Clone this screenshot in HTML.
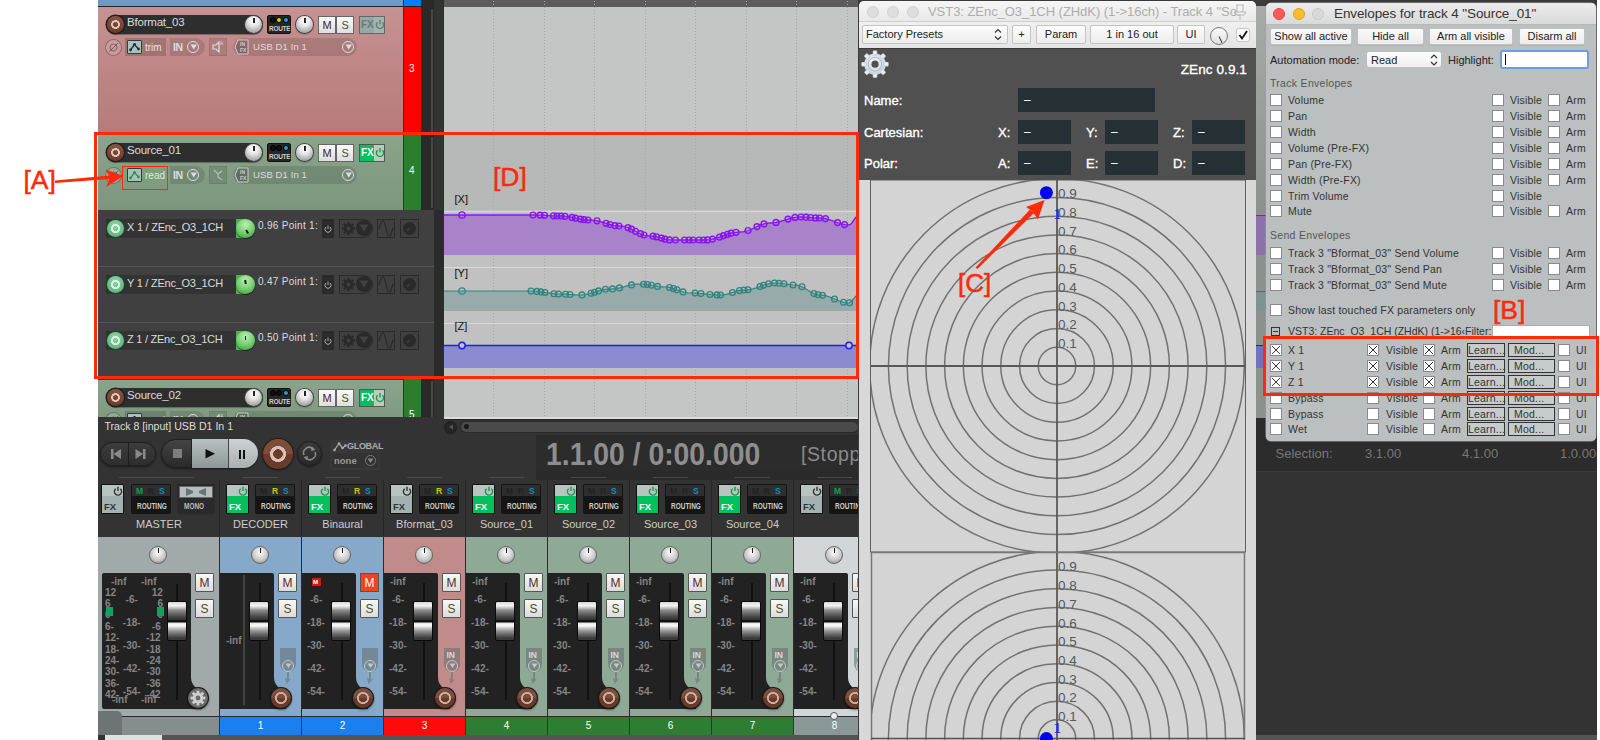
<!DOCTYPE html><html><head><meta charset="utf-8"><style>
*{margin:0;padding:0;box-sizing:border-box}
html,body{width:1600px;height:740px;overflow:hidden;background:#fff;font-family:"Liberation Sans",sans-serif}
div{position:absolute}
.t{white-space:nowrap;line-height:1}
svg{position:absolute}
</style></head><body>
<div style="left:98px;top:0px;width:1499px;height:740px;background:#333"></div>
<div style="left:98px;top:0px;width:305px;height:6px;background:#6f9ac4"></div>
<div style="left:404px;top:0px;width:17px;height:6px;background:#0a7ef5"></div>
<div style="left:98px;top:6px;width:323px;height:1px;background:#222"></div>
<div style="left:98px;top:7px;width:305px;height:127px;background:linear-gradient(#c69292,#b77a7a)"></div>
<div style="left:404px;top:7px;width:17px;height:127px;background:#ff0000"></div>
<div style="left:98px;top:135px;width:305px;height:75px;background:linear-gradient(#8ba58c,#7b967d)"></div>
<div style="left:98px;top:134px;width:323px;height:1px;background:#222"></div>
<div style="left:404px;top:135px;width:17px;height:75px;background:#2e7d2e"></div>
<div style="left:98px;top:210px;width:336px;height:168px;background:#404040"></div>
<div style="left:98px;top:266px;width:336px;height:1px;background:#555"></div>
<div style="left:98px;top:322px;width:336px;height:1px;background:#555"></div>
<div style="left:98px;top:378px;width:323px;height:1px;background:#222"></div>
<div style="left:98px;top:379px;width:305px;height:38px;background:linear-gradient(#8ba58c,#809a82)"></div>
<div style="left:98px;top:379px;width:305px;height:1px;background:#3a3a3a"></div>
<div style="left:404px;top:379px;width:17px;height:38px;background:#2e7d2e"></div>
<div class="t" style="left:409px;top:64px;color:#fff;font-size:10px">3</div>
<div class="t" style="left:409px;top:166px;color:#fff;font-size:10px">4</div>
<div class="t" style="left:409px;top:410px;color:#fff;font-size:10px">5</div>
<div style="left:421px;top:0px;width:13px;height:417px;background:#2a2a2a"></div>
<div style="left:434px;top:0px;width:9px;height:417px;background:#333"></div>
<div style="left:443px;top:0px;width:1px;height:417px;background:#4a2020"></div>
<div style="left:98px;top:210px;width:336px;height:168px;background:#404040"></div>
<div style="left:98px;top:266px;width:336px;height:1px;background:#555"></div>
<div style="left:98px;top:322px;width:336px;height:1px;background:#555"></div>
<div style="left:434px;top:210px;width:9px;height:168px;background:#2b2b2b"></div>
<div style="left:430.5px;top:9px;width:2px;height:123px;background:#474747"></div>
<div style="left:430.5px;top:137px;width:2px;height:71px;background:#474747"></div>
<div style="left:430.5px;top:381px;width:2px;height:36px;background:#474747"></div>
<div style="left:106px;top:15px;width:157px;height:19px;background:#2e2e2e;border-radius:10px;box-shadow:0 1px 1px rgba(0,0,0,.3)"></div>
<div style="left:107px;top:16px;width:17px;height:17px;background:radial-gradient(circle,transparent 0 2.2px,#d9c8c0 2.6px 4.2px,transparent 4.6px),linear-gradient(#8c5441,#6e3a28);border-radius:50%;box-shadow:0 0 0 1.5px #1e1e1e"></div>
<div class="t" style="left:127px;top:17px;color:#dcdcdc;font-size:11.5px;letter-spacing:-0.2px">Bformat_03</div>
<div style="left:245px;top:16px;width:17px;height:17px;background:radial-gradient(circle at 50% 30%,#ffffff 0,#e6e6e6 35%,#a8a8a8 75%,#6a6a6a 100%);border-radius:50%;box-shadow:0 0 0 1px #444,0 1px 2px rgba(0,0,0,.5)"></div>
<div style="left:253px;top:18px;width:1.5px;height:5px;background:#222"></div>
<div style="left:267px;top:15px;width:24px;height:19px;background:#262626;border:1px solid #111;border-radius:2px"></div>
<div style="left:269.5px;top:17px;width:6px;height:6px;background:#111;border-radius:50%;border:1px solid #000"></div>
<div style="left:276.0px;top:17px;width:6px;height:6px;background:#d8d800;border-radius:50%;border:1px solid #000"></div>
<div style="left:282.5px;top:17px;width:6px;height:6px;background:#1ea0e0;border-radius:50%;border:1px solid #000"></div>
<div class="t" style="left:269px;top:25.5px;color:#ccc;font-size:6.5px;font-weight:bold;letter-spacing:-0.3px">ROUTE</div>
<div style="left:296px;top:16px;width:17px;height:17px;background:radial-gradient(circle at 50% 30%,#ffffff 0,#e6e6e6 35%,#a8a8a8 75%,#6a6a6a 100%);border-radius:50%;box-shadow:0 0 0 1px #444,0 1px 2px rgba(0,0,0,.5)"></div>
<div style="left:304px;top:18px;width:1.5px;height:5px;background:#222"></div>
<div style="left:318px;top:16px;width:18px;height:18px;background:linear-gradient(#fafafa,#dedede);border:1px solid #666"></div>
<div class="t" style="left:322.5px;top:19.5px;color:#4a2018;font-size:11px">M</div>
<div style="left:336px;top:16px;width:18px;height:18px;background:linear-gradient(#fafafa,#dedede);border:1px solid #666"></div>
<div class="t" style="left:341.5px;top:19.5px;color:#4a5418;font-size:11px">S</div>
<div style="left:359px;top:16px;width:26px;height:18px;background:#a2b5af;border:1px solid #666"></div>
<div style="left:360px;top:17px;width:14px;height:16px;background:#96a9a4"></div>
<div class="t" style="left:361px;top:20px;color:#6a7a75;font-size:10px;font-weight:bold">FX</div>
<svg style="left:375px;top:19px" width="10" height="11"><path d="M2.6,3.2 A3.6,3.6 0 1 0 7.4,3.2" fill="none" stroke="#6a7a75" stroke-width="1.4"/><line x1="5" y1="1" x2="5" y2="5.5" stroke="#6a7a75" stroke-width="1.4"/></svg>
<div style="left:105px;top:39px;width:17px;height:17px;border:1px solid rgba(0,0,0,.3);border-radius:50%;background:rgba(255,255,255,.15)"></div>
<svg style="left:108px;top:42px" width="11" height="11"><circle cx="5.5" cy="5.5" r="3.5" fill="none" stroke="rgba(0,0,0,.35)" stroke-width="1"/><line x1="1" y1="10" x2="10" y2="1" stroke="rgba(0,0,0,.35)" stroke-width="1"/></svg>
<div style="left:125px;top:38px;width:41px;height:18px;background:rgba(0,0,0,.16)"></div>
<div style="left:127px;top:40px;width:15px;height:14px;background:#a8c2c0;border:1px solid #3a3a3a;border-radius:1px"></div>
<svg style="left:128px;top:41px" width="13" height="12"><polyline points="2.5,9 6.5,3.5 10.5,8" fill="none" stroke="#2a2a2a" stroke-width="1.3"/><circle cx="2.5" cy="9" r="1.4" fill="#2a2a2a"/><circle cx="6.5" cy="3.5" r="1.4" fill="#2a2a2a"/><circle cx="10.5" cy="8" r="1.4" fill="#2a2a2a"/></svg>
<div class="t" style="left:145px;top:43px;color:#e4e4e4;font-size:10px">trim</div>
<div style="left:170px;top:38px;width:35px;height:18px;background:rgba(0,0,0,.12);border-radius:0 9px 9px 0"></div>
<div class="t" style="left:173px;top:42px;color:#ddd;font-size:10.5px;font-weight:bold;letter-spacing:-0.5px">IN</div>
<div style="left:187px;top:41px;width:12px;height:12px;border:1.5px solid #ddd;border-radius:50%"></div>
<svg style="left:189.5px;top:44px" width="8" height="6"><polygon points="0.5,0.5 7,0.5 3.75,5.5" fill="#ddd"/></svg>
<div style="left:209px;top:38px;width:18px;height:18px;background:rgba(0,0,0,.10);border:1px solid rgba(0,0,0,.08)"></div>
<svg style="left:211px;top:40px" width="14" height="14"><path d="M2,5 h3 l3,-3 v10 l-3,-3 h-3 z" fill="none" stroke="#ddd" stroke-width="1.2"/><text x="9" y="5" font-size="5" fill="#ddd" font-family="Liberation Sans">A</text></svg>
<div style="left:233px;top:38px;width:124px;height:18px;background:rgba(0,0,0,.12);border-radius:9px"></div>
<svg style="left:234px;top:39px" width="16" height="16"><polygon points="4,1 14,1 14,15 4,15 1,8" fill="rgba(0,0,0,.18)" stroke="#ccc" stroke-width="1"/><text x="6" y="7" font-size="5" fill="#ccc" font-family="Liberation Sans" font-weight="bold">IN</text><text x="6" y="13" font-size="5" fill="#ccc" font-family="Liberation Sans" font-weight="bold">FX</text></svg>
<div class="t" style="left:253px;top:41.5px;color:#ddd;font-size:9.5px;letter-spacing:0.1px">USB D1 In 1</div>
<div style="left:342px;top:41px;width:12px;height:12px;border:1.5px solid #ddd;border-radius:50%"></div>
<svg style="left:344.5px;top:44px" width="8" height="6"><polygon points="0.5,0.5 7,0.5 3.75,5.5" fill="#ddd"/></svg>
<div style="left:106px;top:143px;width:157px;height:19px;background:#2e2e2e;border-radius:10px;box-shadow:0 1px 1px rgba(0,0,0,.3)"></div>
<div style="left:107px;top:144px;width:17px;height:17px;background:radial-gradient(circle,transparent 0 2.2px,#d9c8c0 2.6px 4.2px,transparent 4.6px),linear-gradient(#8c5441,#6e3a28);border-radius:50%;box-shadow:0 0 0 1.5px #1e1e1e"></div>
<div class="t" style="left:127px;top:145px;color:#dcdcdc;font-size:11.5px;letter-spacing:-0.2px">Source_01</div>
<div style="left:245px;top:144px;width:17px;height:17px;background:radial-gradient(circle at 50% 30%,#ffffff 0,#e6e6e6 35%,#a8a8a8 75%,#6a6a6a 100%);border-radius:50%;box-shadow:0 0 0 1px #444,0 1px 2px rgba(0,0,0,.5)"></div>
<div style="left:253px;top:146px;width:1.5px;height:5px;background:#222"></div>
<div style="left:267px;top:143px;width:24px;height:19px;background:#262626;border:1px solid #111;border-radius:2px"></div>
<div style="left:269.5px;top:145px;width:6px;height:6px;background:#111;border-radius:50%;border:1px solid #000"></div>
<div style="left:276.0px;top:145px;width:6px;height:6px;background:#111;border-radius:50%;border:1px solid #000"></div>
<div style="left:282.5px;top:145px;width:6px;height:6px;background:#1ea0e0;border-radius:50%;border:1px solid #000"></div>
<div class="t" style="left:269px;top:153.5px;color:#ccc;font-size:6.5px;font-weight:bold;letter-spacing:-0.3px">ROUTE</div>
<div style="left:296px;top:144px;width:17px;height:17px;background:radial-gradient(circle at 50% 30%,#ffffff 0,#e6e6e6 35%,#a8a8a8 75%,#6a6a6a 100%);border-radius:50%;box-shadow:0 0 0 1px #444,0 1px 2px rgba(0,0,0,.5)"></div>
<div style="left:304px;top:146px;width:1.5px;height:5px;background:#222"></div>
<div style="left:318px;top:144px;width:18px;height:18px;background:linear-gradient(#fafafa,#dedede);border:1px solid #666"></div>
<div class="t" style="left:322.5px;top:147.5px;color:#4a2018;font-size:11px">M</div>
<div style="left:336px;top:144px;width:18px;height:18px;background:linear-gradient(#fafafa,#dedede);border:1px solid #666"></div>
<div class="t" style="left:341.5px;top:147.5px;color:#4a5418;font-size:11px">S</div>
<div style="left:359px;top:144px;width:26px;height:18px;background:#b8cfc0;border:1px solid #555"></div>
<div style="left:360px;top:145px;width:14px;height:16px;background:#00c060"></div>
<div class="t" style="left:361px;top:148px;color:#fff;font-size:10px;font-weight:bold">FX</div>
<svg style="left:375px;top:147px" width="10" height="11"><path d="M2.6,3.2 A3.6,3.6 0 1 0 7.4,3.2" fill="none" stroke="#1a9a50" stroke-width="1.4"/><line x1="5" y1="1" x2="5" y2="5.5" stroke="#1a9a50" stroke-width="1.4"/></svg>
<div style="left:105px;top:167px;width:17px;height:17px;border:1px solid rgba(0,0,0,.3);border-radius:50%;background:rgba(255,255,255,.15)"></div>
<svg style="left:108px;top:170px" width="11" height="11"><circle cx="5.5" cy="5.5" r="3.5" fill="none" stroke="rgba(0,0,0,.35)" stroke-width="1"/><line x1="1" y1="10" x2="10" y2="1" stroke="rgba(0,0,0,.35)" stroke-width="1"/></svg>
<div style="left:125px;top:166px;width:41px;height:18px;background:rgba(110,170,110,.35)"></div>
<div style="left:127px;top:168px;width:15px;height:14px;background:#a8c2c0;border:1px solid #3a3a3a;border-radius:1px"></div>
<svg style="left:128px;top:169px" width="13" height="12"><polyline points="2.5,9 6.5,3.5 10.5,8" fill="none" stroke="#2a9a3a" stroke-width="1.3"/><circle cx="2.5" cy="9" r="1.4" fill="#2a9a3a"/><circle cx="6.5" cy="3.5" r="1.4" fill="#2a9a3a"/><circle cx="10.5" cy="8" r="1.4" fill="#2a9a3a"/></svg>
<div class="t" style="left:145px;top:171px;color:#e4e4e4;font-size:10px">read</div>
<div style="left:170px;top:166px;width:35px;height:18px;background:rgba(0,0,0,.12);border-radius:0 9px 9px 0"></div>
<div class="t" style="left:173px;top:170px;color:#ddd;font-size:10.5px;font-weight:bold;letter-spacing:-0.5px">IN</div>
<div style="left:187px;top:169px;width:12px;height:12px;border:1.5px solid #ddd;border-radius:50%"></div>
<svg style="left:189.5px;top:172px" width="8" height="6"><polygon points="0.5,0.5 7,0.5 3.75,5.5" fill="#ddd"/></svg>
<div style="left:209px;top:166px;width:18px;height:18px;background:rgba(0,0,0,.10);border:1px solid rgba(0,0,0,.08)"></div>
<svg style="left:211px;top:168px" width="14" height="14"><path d="M3,2 L7,6 V9 L11,12 M7,6 L11,3" fill="none" stroke="rgba(255,255,255,.45)" stroke-width="1.2"/></svg>
<div style="left:233px;top:166px;width:124px;height:18px;background:rgba(0,0,0,.12);border-radius:9px"></div>
<svg style="left:234px;top:167px" width="16" height="16"><polygon points="4,1 14,1 14,15 4,15 1,8" fill="rgba(0,0,0,.18)" stroke="#ccc" stroke-width="1"/><text x="6" y="7" font-size="5" fill="#ccc" font-family="Liberation Sans" font-weight="bold">IN</text><text x="6" y="13" font-size="5" fill="#ccc" font-family="Liberation Sans" font-weight="bold">FX</text></svg>
<div class="t" style="left:253px;top:169.5px;color:#ddd;font-size:9.5px;letter-spacing:0.1px">USB D1 In 1</div>
<div style="left:342px;top:169px;width:12px;height:12px;border:1.5px solid #ddd;border-radius:50%"></div>
<svg style="left:344.5px;top:172px" width="8" height="6"><polygon points="0.5,0.5 7,0.5 3.75,5.5" fill="#ddd"/></svg>
<div style="left:106px;top:219px;width:130px;height:19px;background:#333"></div>
<div style="left:107px;top:220px;width:17px;height:17px;background:radial-gradient(circle,transparent 0 2.4px,#d8f0e0 2.8px 4.4px,transparent 4.8px),radial-gradient(circle at 50% 30%,#8fd4a8,#5aaa78);border-radius:50%;box-shadow:0 0 0 1.2px #1a4a2a"></div>
<div class="t" style="left:127px;top:221.5px;color:#dcdcdc;font-size:11px;letter-spacing:-0.25px">X 1 / ZEnc_O3_1CH</div>
<div style="left:236px;top:219px;width:10px;height:19px;background:#4fae4f"></div>
<div style="left:236px;top:219px;width:19px;height:19px;background:radial-gradient(circle at 50% 30%,#b8f2b0,#78d070 50%,#3e9a3e 95%);border-radius:50%;box-shadow:0 1px 1px rgba(0,0,0,.5)"></div>
<div style="left:244.8px;top:223.5px;width:1.6px;height:4px;background:#1a1a1a;transform-origin:50% 5px;transform:rotate(150deg)"></div>
<div class="t" style="left:258px;top:221px;color:#dcdcdc;font-size:10px;letter-spacing:0.3px">0.96 Point 1:</div>
<div style="left:322px;top:219px;width:12px;height:19px;background:#2a2a2a"></div>
<svg style="left:323px;top:224px" width="10" height="10"><path d="M3,3 A3,3 0 1 0 7,3" fill="none" stroke="#aaa" stroke-width="1"/><line x1="5" y1="1.5" x2="5" y2="5" stroke="#aaa" stroke-width="1"/></svg>
<div style="left:339px;top:219px;width:34px;height:19px;border:1px solid #2a2a2a;border-radius:0 10px 10px 0"></div>
<svg style="left:341px;top:221px" width="15" height="15"><g fill="#2a2a2a"><circle cx="7.5" cy="7.5" r="4.5"/><rect x="6.2" y="1" width="2.6" height="3.5" transform="rotate(0 7.5 7.5)"/><rect x="6.2" y="1" width="2.6" height="3.5" transform="rotate(45 7.5 7.5)"/><rect x="6.2" y="1" width="2.6" height="3.5" transform="rotate(90 7.5 7.5)"/><rect x="6.2" y="1" width="2.6" height="3.5" transform="rotate(135 7.5 7.5)"/><rect x="6.2" y="1" width="2.6" height="3.5" transform="rotate(180 7.5 7.5)"/><rect x="6.2" y="1" width="2.6" height="3.5" transform="rotate(225 7.5 7.5)"/><rect x="6.2" y="1" width="2.6" height="3.5" transform="rotate(270 7.5 7.5)"/><rect x="6.2" y="1" width="2.6" height="3.5" transform="rotate(315 7.5 7.5)"/></g><circle cx="7.5" cy="7.5" r="2" fill="#404040"/></svg>
<div style="left:356px;top:220px;width:16px;height:16px;background:#2a2a2a;border-radius:50%"></div>
<svg style="left:359px;top:224px" width="10" height="8"><polygon points="0.5,0.5 9.5,0.5 5,7.5" fill="#404040"/></svg>
<div style="left:377px;top:219px;width:18px;height:19px;border:1px solid #2a2a2a"></div>
<svg style="left:378px;top:220px" width="16" height="17"><path d="M1,9 C4,-2 6,-2 8,8.5 S12,19 15,8" fill="none" stroke="#2a2a2a" stroke-width="1.3"/></svg>
<div style="left:400px;top:219px;width:19px;height:19px;border:1px solid #2a2a2a"></div>
<div style="left:403px;top:222px;width:13px;height:13px;background:#2a2a2a;border-radius:50%"></div>
<svg style="left:403px;top:222px" width="13" height="13"><line x1="4" y1="9" x2="7" y2="6" stroke="#404040" stroke-width="1.5"/></svg>
<div style="left:106px;top:275px;width:130px;height:19px;background:#333"></div>
<div style="left:107px;top:276px;width:17px;height:17px;background:radial-gradient(circle,transparent 0 2.4px,#d8f0e0 2.8px 4.4px,transparent 4.8px),radial-gradient(circle at 50% 30%,#8fd4a8,#5aaa78);border-radius:50%;box-shadow:0 0 0 1.2px #1a4a2a"></div>
<div class="t" style="left:127px;top:277.5px;color:#dcdcdc;font-size:11px;letter-spacing:-0.25px">Y 1 / ZEnc_O3_1CH</div>
<div style="left:236px;top:275px;width:10px;height:19px;background:#4fae4f"></div>
<div style="left:236px;top:275px;width:19px;height:19px;background:radial-gradient(circle at 50% 30%,#b8f2b0,#78d070 50%,#3e9a3e 95%);border-radius:50%;box-shadow:0 1px 1px rgba(0,0,0,.5)"></div>
<div style="left:244.8px;top:279.5px;width:1.6px;height:4px;background:#1a1a1a;transform-origin:50% 5px;transform:rotate(-10deg)"></div>
<div class="t" style="left:258px;top:277px;color:#dcdcdc;font-size:10px;letter-spacing:0.3px">0.47 Point 1:</div>
<div style="left:322px;top:275px;width:12px;height:19px;background:#2a2a2a"></div>
<svg style="left:323px;top:280px" width="10" height="10"><path d="M3,3 A3,3 0 1 0 7,3" fill="none" stroke="#aaa" stroke-width="1"/><line x1="5" y1="1.5" x2="5" y2="5" stroke="#aaa" stroke-width="1"/></svg>
<div style="left:339px;top:275px;width:34px;height:19px;border:1px solid #2a2a2a;border-radius:0 10px 10px 0"></div>
<svg style="left:341px;top:277px" width="15" height="15"><g fill="#2a2a2a"><circle cx="7.5" cy="7.5" r="4.5"/><rect x="6.2" y="1" width="2.6" height="3.5" transform="rotate(0 7.5 7.5)"/><rect x="6.2" y="1" width="2.6" height="3.5" transform="rotate(45 7.5 7.5)"/><rect x="6.2" y="1" width="2.6" height="3.5" transform="rotate(90 7.5 7.5)"/><rect x="6.2" y="1" width="2.6" height="3.5" transform="rotate(135 7.5 7.5)"/><rect x="6.2" y="1" width="2.6" height="3.5" transform="rotate(180 7.5 7.5)"/><rect x="6.2" y="1" width="2.6" height="3.5" transform="rotate(225 7.5 7.5)"/><rect x="6.2" y="1" width="2.6" height="3.5" transform="rotate(270 7.5 7.5)"/><rect x="6.2" y="1" width="2.6" height="3.5" transform="rotate(315 7.5 7.5)"/></g><circle cx="7.5" cy="7.5" r="2" fill="#404040"/></svg>
<div style="left:356px;top:276px;width:16px;height:16px;background:#2a2a2a;border-radius:50%"></div>
<svg style="left:359px;top:280px" width="10" height="8"><polygon points="0.5,0.5 9.5,0.5 5,7.5" fill="#404040"/></svg>
<div style="left:377px;top:275px;width:18px;height:19px;border:1px solid #2a2a2a"></div>
<svg style="left:378px;top:276px" width="16" height="17"><path d="M1,9 C4,-2 6,-2 8,8.5 S12,19 15,8" fill="none" stroke="#2a2a2a" stroke-width="1.3"/></svg>
<div style="left:400px;top:275px;width:19px;height:19px;border:1px solid #2a2a2a"></div>
<div style="left:403px;top:278px;width:13px;height:13px;background:#2a2a2a;border-radius:50%"></div>
<svg style="left:403px;top:278px" width="13" height="13"><line x1="4" y1="9" x2="7" y2="6" stroke="#404040" stroke-width="1.5"/></svg>
<div style="left:106px;top:331px;width:130px;height:19px;background:#333"></div>
<div style="left:107px;top:332px;width:17px;height:17px;background:radial-gradient(circle,transparent 0 2.4px,#d8f0e0 2.8px 4.4px,transparent 4.8px),radial-gradient(circle at 50% 30%,#8fd4a8,#5aaa78);border-radius:50%;box-shadow:0 0 0 1.2px #1a4a2a"></div>
<div class="t" style="left:127px;top:333.5px;color:#dcdcdc;font-size:11px;letter-spacing:-0.25px">Z 1 / ZEnc_O3_1CH</div>
<div style="left:236px;top:331px;width:10px;height:19px;background:#4fae4f"></div>
<div style="left:236px;top:331px;width:19px;height:19px;background:radial-gradient(circle at 50% 30%,#b8f2b0,#78d070 50%,#3e9a3e 95%);border-radius:50%;box-shadow:0 1px 1px rgba(0,0,0,.5)"></div>
<div style="left:244.8px;top:335.5px;width:1.6px;height:4px;background:#1a1a1a;transform-origin:50% 5px;transform:rotate(0deg)"></div>
<div class="t" style="left:258px;top:333px;color:#dcdcdc;font-size:10px;letter-spacing:0.3px">0.50 Point 1:</div>
<div style="left:322px;top:331px;width:12px;height:19px;background:#2a2a2a"></div>
<svg style="left:323px;top:336px" width="10" height="10"><path d="M3,3 A3,3 0 1 0 7,3" fill="none" stroke="#aaa" stroke-width="1"/><line x1="5" y1="1.5" x2="5" y2="5" stroke="#aaa" stroke-width="1"/></svg>
<div style="left:339px;top:331px;width:34px;height:19px;border:1px solid #2a2a2a;border-radius:0 10px 10px 0"></div>
<svg style="left:341px;top:333px" width="15" height="15"><g fill="#2a2a2a"><circle cx="7.5" cy="7.5" r="4.5"/><rect x="6.2" y="1" width="2.6" height="3.5" transform="rotate(0 7.5 7.5)"/><rect x="6.2" y="1" width="2.6" height="3.5" transform="rotate(45 7.5 7.5)"/><rect x="6.2" y="1" width="2.6" height="3.5" transform="rotate(90 7.5 7.5)"/><rect x="6.2" y="1" width="2.6" height="3.5" transform="rotate(135 7.5 7.5)"/><rect x="6.2" y="1" width="2.6" height="3.5" transform="rotate(180 7.5 7.5)"/><rect x="6.2" y="1" width="2.6" height="3.5" transform="rotate(225 7.5 7.5)"/><rect x="6.2" y="1" width="2.6" height="3.5" transform="rotate(270 7.5 7.5)"/><rect x="6.2" y="1" width="2.6" height="3.5" transform="rotate(315 7.5 7.5)"/></g><circle cx="7.5" cy="7.5" r="2" fill="#404040"/></svg>
<div style="left:356px;top:332px;width:16px;height:16px;background:#2a2a2a;border-radius:50%"></div>
<svg style="left:359px;top:336px" width="10" height="8"><polygon points="0.5,0.5 9.5,0.5 5,7.5" fill="#404040"/></svg>
<div style="left:377px;top:331px;width:18px;height:19px;border:1px solid #2a2a2a"></div>
<svg style="left:378px;top:332px" width="16" height="17"><path d="M1,9 C4,-2 6,-2 8,8.5 S12,19 15,8" fill="none" stroke="#2a2a2a" stroke-width="1.3"/></svg>
<div style="left:400px;top:331px;width:19px;height:19px;border:1px solid #2a2a2a"></div>
<div style="left:403px;top:334px;width:13px;height:13px;background:#2a2a2a;border-radius:50%"></div>
<svg style="left:403px;top:334px" width="13" height="13"><line x1="4" y1="9" x2="7" y2="6" stroke="#404040" stroke-width="1.5"/></svg>
<div style="left:106px;top:388px;width:157px;height:19px;background:#2e2e2e;border-radius:10px;box-shadow:0 1px 1px rgba(0,0,0,.3)"></div>
<div style="left:107px;top:389px;width:17px;height:17px;background:radial-gradient(circle,transparent 0 2.2px,#d9c8c0 2.6px 4.2px,transparent 4.6px),linear-gradient(#8c5441,#6e3a28);border-radius:50%;box-shadow:0 0 0 1.5px #1e1e1e"></div>
<div class="t" style="left:127px;top:390px;color:#dcdcdc;font-size:11.5px;letter-spacing:-0.2px">Source_02</div>
<div style="left:245px;top:389px;width:17px;height:17px;background:radial-gradient(circle at 50% 30%,#ffffff 0,#e6e6e6 35%,#a8a8a8 75%,#6a6a6a 100%);border-radius:50%;box-shadow:0 0 0 1px #444,0 1px 2px rgba(0,0,0,.5)"></div>
<div style="left:253px;top:391px;width:1.5px;height:5px;background:#222"></div>
<div style="left:267px;top:388px;width:24px;height:19px;background:#262626;border:1px solid #111;border-radius:2px"></div>
<div style="left:269.5px;top:390px;width:6px;height:6px;background:#111;border-radius:50%;border:1px solid #000"></div>
<div style="left:276.0px;top:390px;width:6px;height:6px;background:#111;border-radius:50%;border:1px solid #000"></div>
<div style="left:282.5px;top:390px;width:6px;height:6px;background:#1ea0e0;border-radius:50%;border:1px solid #000"></div>
<div class="t" style="left:269px;top:398.5px;color:#ccc;font-size:6.5px;font-weight:bold;letter-spacing:-0.3px">ROUTE</div>
<div style="left:296px;top:389px;width:17px;height:17px;background:radial-gradient(circle at 50% 30%,#ffffff 0,#e6e6e6 35%,#a8a8a8 75%,#6a6a6a 100%);border-radius:50%;box-shadow:0 0 0 1px #444,0 1px 2px rgba(0,0,0,.5)"></div>
<div style="left:304px;top:391px;width:1.5px;height:5px;background:#222"></div>
<div style="left:318px;top:389px;width:18px;height:18px;background:linear-gradient(#fafafa,#dedede);border:1px solid #666"></div>
<div class="t" style="left:322.5px;top:392.5px;color:#4a2018;font-size:11px">M</div>
<div style="left:336px;top:389px;width:18px;height:18px;background:linear-gradient(#fafafa,#dedede);border:1px solid #666"></div>
<div class="t" style="left:341.5px;top:392.5px;color:#4a5418;font-size:11px">S</div>
<div style="left:359px;top:389px;width:26px;height:18px;background:#b8cfc0;border:1px solid #555"></div>
<div style="left:360px;top:390px;width:14px;height:16px;background:#00c060"></div>
<div class="t" style="left:361px;top:393px;color:#fff;font-size:10px;font-weight:bold">FX</div>
<svg style="left:375px;top:392px" width="10" height="11"><path d="M2.6,3.2 A3.6,3.6 0 1 0 7.4,3.2" fill="none" stroke="#1a9a50" stroke-width="1.4"/><line x1="5" y1="1" x2="5" y2="5.5" stroke="#1a9a50" stroke-width="1.4"/></svg>
<div style="left:105px;top:412px;width:17px;height:17px;border:1px solid rgba(0,0,0,.3);border-radius:50%;background:rgba(255,255,255,.15)"></div>
<svg style="left:108px;top:415px" width="11" height="11"><circle cx="5.5" cy="5.5" r="3.5" fill="none" stroke="rgba(0,0,0,.35)" stroke-width="1"/><line x1="1" y1="10" x2="10" y2="1" stroke="rgba(0,0,0,.35)" stroke-width="1"/></svg>
<div style="left:125px;top:411px;width:41px;height:18px;background:rgba(0,0,0,.16)"></div>
<div style="left:127px;top:413px;width:15px;height:14px;background:#a8c2c0;border:1px solid #3a3a3a;border-radius:1px"></div>
<svg style="left:128px;top:414px" width="13" height="12"><polyline points="2.5,9 6.5,3.5 10.5,8" fill="none" stroke="#2a2a2a" stroke-width="1.3"/><circle cx="2.5" cy="9" r="1.4" fill="#2a2a2a"/><circle cx="6.5" cy="3.5" r="1.4" fill="#2a2a2a"/><circle cx="10.5" cy="8" r="1.4" fill="#2a2a2a"/></svg>
<div class="t" style="left:145px;top:416px;color:#e4e4e4;font-size:10px">read</div>
<div style="left:170px;top:411px;width:35px;height:18px;background:rgba(0,0,0,.12);border-radius:0 9px 9px 0"></div>
<div class="t" style="left:173px;top:415px;color:#ddd;font-size:10.5px;font-weight:bold;letter-spacing:-0.5px">IN</div>
<div style="left:187px;top:414px;width:12px;height:12px;border:1.5px solid #ddd;border-radius:50%"></div>
<svg style="left:189.5px;top:417px" width="8" height="6"><polygon points="0.5,0.5 7,0.5 3.75,5.5" fill="#ddd"/></svg>
<div style="left:209px;top:411px;width:18px;height:18px;background:rgba(0,0,0,.10);border:1px solid rgba(0,0,0,.08)"></div>
<svg style="left:211px;top:413px" width="14" height="14"><path d="M2,5 h3 l3,-3 v10 l-3,-3 h-3 z" fill="none" stroke="#ddd" stroke-width="1.2"/><text x="9" y="5" font-size="5" fill="#ddd" font-family="Liberation Sans">A</text></svg>
<div style="left:233px;top:411px;width:124px;height:18px;background:rgba(0,0,0,.12);border-radius:9px"></div>
<svg style="left:234px;top:412px" width="16" height="16"><polygon points="4,1 14,1 14,15 4,15 1,8" fill="rgba(0,0,0,.18)" stroke="#ccc" stroke-width="1"/><text x="6" y="7" font-size="5" fill="#ccc" font-family="Liberation Sans" font-weight="bold">IN</text><text x="6" y="13" font-size="5" fill="#ccc" font-family="Liberation Sans" font-weight="bold">FX</text></svg>
<div class="t" style="left:253px;top:414.5px;color:#ddd;font-size:9.5px;letter-spacing:0.1px">USB D1 In 1</div>
<div style="left:342px;top:414px;width:12px;height:12px;border:1.5px solid #ddd;border-radius:50%"></div>
<svg style="left:344.5px;top:417px" width="8" height="6"><polygon points="0.5,0.5 7,0.5 3.75,5.5" fill="#ddd"/></svg>
<div style="left:444px;top:0px;width:414px;height:417px;background:#c4c6c5"></div>
<div style="left:444px;top:0px;width:414px;height:6.5px;background:#5b5c5b"></div>
<div style="left:444px;top:135px;width:414px;height:75px;background:#b7b9b8"></div>
<div style="left:444px;top:210px;width:414px;height:168px;background:#c0c1c0"></div>
<div style="left:493.0px;top:1px;width:1px;height:416px;background:repeating-linear-gradient(#a4a5a4 0 1px,transparent 1px 3px)"></div>
<div style="left:543.55px;top:1px;width:1px;height:416px;background:repeating-linear-gradient(#a4a5a4 0 1px,transparent 1px 3px)"></div>
<div style="left:594.1px;top:1px;width:1px;height:416px;background:repeating-linear-gradient(#a4a5a4 0 1px,transparent 1px 3px)"></div>
<div style="left:644.65px;top:1px;width:1px;height:416px;background:repeating-linear-gradient(#a4a5a4 0 1px,transparent 1px 3px)"></div>
<div style="left:695.2px;top:1px;width:1px;height:416px;background:repeating-linear-gradient(#a4a5a4 0 1px,transparent 1px 3px)"></div>
<div style="left:745.75px;top:1px;width:1px;height:416px;background:repeating-linear-gradient(#a4a5a4 0 1px,transparent 1px 3px)"></div>
<div style="left:796.3px;top:1px;width:1px;height:416px;background:repeating-linear-gradient(#a4a5a4 0 1px,transparent 1px 3px)"></div>
<div style="left:846.8499999999999px;top:1px;width:1px;height:416px;background:repeating-linear-gradient(#a4a5a4 0 1px,transparent 1px 3px)"></div>
<div style="left:444px;top:211px;width:414px;height:1px;background:#d8d9d8"></div>
<div style="left:444px;top:267px;width:414px;height:1px;background:#d8d9d8"></div>
<div style="left:444px;top:323px;width:414px;height:1px;background:#d8d9d8"></div>
<svg style="left:0;top:0" width="1600" height="740"><polygon points="444,215 461.0,215.0 463.0,215.0 465.0,215.0 467.0,215.0 469.0,215.0 471.0,215.0 473.0,215.0 475.0,215.0 477.0,215.0 479.0,215.0 481.0,215.0 483.0,215.0 485.0,215.0 487.0,215.0 489.0,215.0 491.0,215.0 493.0,215.0 495.0,215.0 497.0,215.0 499.0,215.0 501.0,215.0 503.0,215.0 505.0,215.0 507.0,215.0 509.0,215.0 511.0,215.0 513.0,215.0 515.0,215.0 517.0,215.0 519.0,215.0 521.0,215.0 523.0,215.0 525.0,215.0 527.0,215.0 529.0,215.0 531.0,215.0 533.0,215.0 535.0,215.0 537.1,215.0 539.2,215.1 541.2,215.1 543.3,215.2 545.4,215.4 547.5,215.5 549.6,215.6 551.7,215.8 553.8,215.9 555.8,215.9 557.9,216.0 560.0,216.0 562.0,216.0 564.0,216.2 566.0,216.4 568.0,216.7 570.0,217.0 572.0,217.4 574.0,217.8 576.0,218.2 578.0,218.6 580.0,219.0 582.0,219.3 584.0,219.6 586.0,219.8 588.0,220.0 590.0,220.0 592.0,220.1 594.0,220.3 596.0,220.6 598.0,221.0 600.0,221.5 602.0,222.1 604.0,222.7 606.0,223.3 608.0,223.9 610.0,224.5 612.0,225.0 614.0,225.4 616.0,225.7 618.0,225.9 620.0,226.0 622.0,226.1 624.0,226.4 626.0,227.0 628.0,227.7 630.0,228.5 632.0,229.5 634.0,230.5 636.0,231.5 638.0,232.5 640.0,233.5 642.0,234.3 644.0,235.0 646.0,235.6 648.0,235.9 650.0,236.0 652.0,236.1 654.0,236.3 656.0,236.7 658.0,237.2 660.0,237.7 662.0,238.3 664.0,238.8 666.0,239.3 668.0,239.7 670.0,239.9 672.0,240.0 674.1,240.0 676.1,240.0 678.2,240.0 680.2,240.0 682.3,240.0 684.4,240.0 686.4,240.0 688.5,240.0 690.6,240.0 692.6,240.0 694.7,240.0 696.8,240.0 698.8,240.0 700.9,240.0 702.9,240.0 705.0,240.0 707.1,239.9 709.1,239.7 711.2,239.4 713.2,239.0 715.3,238.4 717.4,237.8 719.4,237.1 721.5,236.4 723.5,235.6 725.6,234.9 727.6,234.2 729.7,233.6 731.8,233.0 733.8,232.6 735.9,232.3 737.9,232.1 740.0,232.0 742.0,231.9 744.0,231.6 746.0,231.1 748.0,230.5 750.0,229.8 752.0,228.9 754.0,228.0 756.0,227.0 758.0,226.1 760.0,225.2 762.0,224.5 764.0,223.9 766.0,223.4 768.0,223.1 770.0,223.0 772.0,222.9 774.0,222.7 776.0,222.4 778.0,222.0 780.0,221.5 782.0,220.9 784.0,220.3 786.0,219.7 788.0,219.1 790.0,218.5 792.0,218.0 794.0,217.6 796.0,217.3 798.0,217.1 800.0,217.0 802.0,217.0 804.0,217.1 806.0,217.2 808.0,217.3 810.0,217.5 812.0,217.7 814.0,217.8 816.0,217.9 818.0,218.0 820.0,218.0 822.1,218.1 824.1,218.3 826.2,218.8 828.3,219.3 830.4,220.0 832.4,220.7 834.5,221.5 836.6,222.3 838.6,223.0 840.7,223.7 842.8,224.2 844.9,224.7 846.9,224.9 849.0,225.0 851.2,223.7 853.5,220.5 855.8,217.3 858.0,216.0 858,255 444,255" fill="#a883c9"/><polyline points="444,215 461.0,215.0 463.0,215.0 465.0,215.0 467.0,215.0 469.0,215.0 471.0,215.0 473.0,215.0 475.0,215.0 477.0,215.0 479.0,215.0 481.0,215.0 483.0,215.0 485.0,215.0 487.0,215.0 489.0,215.0 491.0,215.0 493.0,215.0 495.0,215.0 497.0,215.0 499.0,215.0 501.0,215.0 503.0,215.0 505.0,215.0 507.0,215.0 509.0,215.0 511.0,215.0 513.0,215.0 515.0,215.0 517.0,215.0 519.0,215.0 521.0,215.0 523.0,215.0 525.0,215.0 527.0,215.0 529.0,215.0 531.0,215.0 533.0,215.0 535.0,215.0 537.1,215.0 539.2,215.1 541.2,215.1 543.3,215.2 545.4,215.4 547.5,215.5 549.6,215.6 551.7,215.8 553.8,215.9 555.8,215.9 557.9,216.0 560.0,216.0 562.0,216.0 564.0,216.2 566.0,216.4 568.0,216.7 570.0,217.0 572.0,217.4 574.0,217.8 576.0,218.2 578.0,218.6 580.0,219.0 582.0,219.3 584.0,219.6 586.0,219.8 588.0,220.0 590.0,220.0 592.0,220.1 594.0,220.3 596.0,220.6 598.0,221.0 600.0,221.5 602.0,222.1 604.0,222.7 606.0,223.3 608.0,223.9 610.0,224.5 612.0,225.0 614.0,225.4 616.0,225.7 618.0,225.9 620.0,226.0 622.0,226.1 624.0,226.4 626.0,227.0 628.0,227.7 630.0,228.5 632.0,229.5 634.0,230.5 636.0,231.5 638.0,232.5 640.0,233.5 642.0,234.3 644.0,235.0 646.0,235.6 648.0,235.9 650.0,236.0 652.0,236.1 654.0,236.3 656.0,236.7 658.0,237.2 660.0,237.7 662.0,238.3 664.0,238.8 666.0,239.3 668.0,239.7 670.0,239.9 672.0,240.0 674.1,240.0 676.1,240.0 678.2,240.0 680.2,240.0 682.3,240.0 684.4,240.0 686.4,240.0 688.5,240.0 690.6,240.0 692.6,240.0 694.7,240.0 696.8,240.0 698.8,240.0 700.9,240.0 702.9,240.0 705.0,240.0 707.1,239.9 709.1,239.7 711.2,239.4 713.2,239.0 715.3,238.4 717.4,237.8 719.4,237.1 721.5,236.4 723.5,235.6 725.6,234.9 727.6,234.2 729.7,233.6 731.8,233.0 733.8,232.6 735.9,232.3 737.9,232.1 740.0,232.0 742.0,231.9 744.0,231.6 746.0,231.1 748.0,230.5 750.0,229.8 752.0,228.9 754.0,228.0 756.0,227.0 758.0,226.1 760.0,225.2 762.0,224.5 764.0,223.9 766.0,223.4 768.0,223.1 770.0,223.0 772.0,222.9 774.0,222.7 776.0,222.4 778.0,222.0 780.0,221.5 782.0,220.9 784.0,220.3 786.0,219.7 788.0,219.1 790.0,218.5 792.0,218.0 794.0,217.6 796.0,217.3 798.0,217.1 800.0,217.0 802.0,217.0 804.0,217.1 806.0,217.2 808.0,217.3 810.0,217.5 812.0,217.7 814.0,217.8 816.0,217.9 818.0,218.0 820.0,218.0 822.1,218.1 824.1,218.3 826.2,218.8 828.3,219.3 830.4,220.0 832.4,220.7 834.5,221.5 836.6,222.3 838.6,223.0 840.7,223.7 842.8,224.2 844.9,224.7 846.9,224.9 849.0,225.0 851.2,223.7 853.5,220.5 855.8,217.3 858.0,216.0" fill="none" stroke="#8a14f0" stroke-width="1.3"/><polygon points="444,291 461.0,291.0 463.0,291.0 465.1,291.0 467.1,291.0 469.1,291.0 471.1,291.0 473.2,291.0 475.2,291.0 477.2,291.0 479.3,291.0 481.3,291.0 483.3,291.0 485.4,291.0 487.4,291.0 489.4,291.0 491.4,291.0 493.5,291.0 495.5,291.0 497.5,291.0 499.6,291.0 501.6,291.0 503.6,291.0 505.6,291.0 507.7,291.0 509.7,291.0 511.7,291.0 513.8,291.0 515.8,291.0 517.8,291.0 519.9,291.0 521.9,291.0 523.9,291.0 525.9,291.0 528.0,291.0 530.0,291.0 532.0,291.0 534.0,291.1 536.0,291.3 538.0,291.5 540.0,291.8 542.0,292.0 544.0,292.3 546.0,292.7 548.0,293.0 550.0,293.2 552.0,293.5 554.0,293.7 556.0,293.9 558.0,294.0 560.0,294.0 562.0,294.0 564.0,294.1 566.0,294.2 568.0,294.3 570.0,294.5 572.0,294.7 574.0,294.8 576.0,294.9 578.0,295.0 580.0,295.0 582.0,294.9 584.0,294.7 586.0,294.4 588.0,294.0 590.0,293.5 592.0,292.9 594.0,292.3 596.0,291.7 598.0,291.1 600.0,290.5 602.0,290.0 604.0,289.6 606.0,289.3 608.0,289.1 610.0,289.0 612.0,288.9 614.0,288.8 616.0,288.5 618.0,288.2 620.0,287.8 622.0,287.3 624.0,286.8 626.0,286.2 628.0,285.7 630.0,285.2 632.0,284.8 634.0,284.5 636.0,284.2 638.0,284.1 640.0,284.0 642.1,284.1 644.2,284.2 646.2,284.4 648.3,284.8 650.4,285.1 652.5,285.5 654.6,285.9 656.7,286.2 658.8,286.6 660.8,286.8 662.9,286.9 665.0,287.0 667.1,287.1 669.2,287.4 671.2,287.9 673.3,288.5 675.4,289.2 677.5,290.0 679.6,290.8 681.7,291.5 683.8,292.1 685.8,292.6 687.9,292.9 690.0,293.0 692.0,293.0 694.0,293.1 696.0,293.2 698.0,293.3 700.0,293.5 702.0,293.7 704.0,293.9 706.0,294.1 708.0,294.3 710.0,294.5 712.0,294.7 714.0,294.8 716.0,294.9 718.0,295.0 720.0,295.0 722.1,294.9 724.2,294.7 726.2,294.3 728.3,293.8 730.4,293.1 732.5,292.5 734.6,291.9 736.7,291.2 738.8,290.7 740.8,290.3 742.9,290.1 745.0,290.0 747.0,289.9 749.0,289.7 751.0,289.3 753.0,288.8 755.0,288.2 757.0,287.6 759.0,286.9 761.0,286.1 763.0,285.4 765.0,284.8 767.0,284.2 769.0,283.7 771.0,283.3 773.0,283.1 775.0,283.0 777.0,283.0 779.0,283.2 781.0,283.4 783.0,283.7 785.0,284.0 787.0,284.3 789.0,284.6 791.0,284.8 793.0,285.0 795.0,285.0 797.1,285.2 799.2,285.7 801.2,286.5 803.3,287.5 805.4,288.7 807.5,290.0 809.6,291.3 811.7,292.5 813.8,293.5 815.8,294.3 817.9,294.8 820.0,295.0 822.1,295.1 824.1,295.4 826.2,295.9 828.3,296.5 830.4,297.3 832.4,298.1 834.5,299.0 836.6,299.9 838.6,300.7 840.7,301.5 842.8,302.1 844.9,302.6 846.9,302.9 849.0,303.0 851.2,301.8 853.5,299.0 855.8,296.2 858.0,295.0 858,311 444,311" fill="#98abaa"/><polyline points="444,291 461.0,291.0 463.0,291.0 465.1,291.0 467.1,291.0 469.1,291.0 471.1,291.0 473.2,291.0 475.2,291.0 477.2,291.0 479.3,291.0 481.3,291.0 483.3,291.0 485.4,291.0 487.4,291.0 489.4,291.0 491.4,291.0 493.5,291.0 495.5,291.0 497.5,291.0 499.6,291.0 501.6,291.0 503.6,291.0 505.6,291.0 507.7,291.0 509.7,291.0 511.7,291.0 513.8,291.0 515.8,291.0 517.8,291.0 519.9,291.0 521.9,291.0 523.9,291.0 525.9,291.0 528.0,291.0 530.0,291.0 532.0,291.0 534.0,291.1 536.0,291.3 538.0,291.5 540.0,291.8 542.0,292.0 544.0,292.3 546.0,292.7 548.0,293.0 550.0,293.2 552.0,293.5 554.0,293.7 556.0,293.9 558.0,294.0 560.0,294.0 562.0,294.0 564.0,294.1 566.0,294.2 568.0,294.3 570.0,294.5 572.0,294.7 574.0,294.8 576.0,294.9 578.0,295.0 580.0,295.0 582.0,294.9 584.0,294.7 586.0,294.4 588.0,294.0 590.0,293.5 592.0,292.9 594.0,292.3 596.0,291.7 598.0,291.1 600.0,290.5 602.0,290.0 604.0,289.6 606.0,289.3 608.0,289.1 610.0,289.0 612.0,288.9 614.0,288.8 616.0,288.5 618.0,288.2 620.0,287.8 622.0,287.3 624.0,286.8 626.0,286.2 628.0,285.7 630.0,285.2 632.0,284.8 634.0,284.5 636.0,284.2 638.0,284.1 640.0,284.0 642.1,284.1 644.2,284.2 646.2,284.4 648.3,284.8 650.4,285.1 652.5,285.5 654.6,285.9 656.7,286.2 658.8,286.6 660.8,286.8 662.9,286.9 665.0,287.0 667.1,287.1 669.2,287.4 671.2,287.9 673.3,288.5 675.4,289.2 677.5,290.0 679.6,290.8 681.7,291.5 683.8,292.1 685.8,292.6 687.9,292.9 690.0,293.0 692.0,293.0 694.0,293.1 696.0,293.2 698.0,293.3 700.0,293.5 702.0,293.7 704.0,293.9 706.0,294.1 708.0,294.3 710.0,294.5 712.0,294.7 714.0,294.8 716.0,294.9 718.0,295.0 720.0,295.0 722.1,294.9 724.2,294.7 726.2,294.3 728.3,293.8 730.4,293.1 732.5,292.5 734.6,291.9 736.7,291.2 738.8,290.7 740.8,290.3 742.9,290.1 745.0,290.0 747.0,289.9 749.0,289.7 751.0,289.3 753.0,288.8 755.0,288.2 757.0,287.6 759.0,286.9 761.0,286.1 763.0,285.4 765.0,284.8 767.0,284.2 769.0,283.7 771.0,283.3 773.0,283.1 775.0,283.0 777.0,283.0 779.0,283.2 781.0,283.4 783.0,283.7 785.0,284.0 787.0,284.3 789.0,284.6 791.0,284.8 793.0,285.0 795.0,285.0 797.1,285.2 799.2,285.7 801.2,286.5 803.3,287.5 805.4,288.7 807.5,290.0 809.6,291.3 811.7,292.5 813.8,293.5 815.8,294.3 817.9,294.8 820.0,295.0 822.1,295.1 824.1,295.4 826.2,295.9 828.3,296.5 830.4,297.3 832.4,298.1 834.5,299.0 836.6,299.9 838.6,300.7 840.7,301.5 842.8,302.1 844.9,302.6 846.9,302.9 849.0,303.0 851.2,301.8 853.5,299.0 855.8,296.2 858.0,295.0" fill="none" stroke="#2f8580" stroke-width="1.2"/><rect x="444" y="345.5" width="414" height="22.5" fill="#8a8bd0"/><line x1="444" y1="345.5" x2="858" y2="345.5" stroke="#2020e0" stroke-width="1.5"/><circle cx="462" cy="215" r="3.2" fill="none" stroke="#8a14f0" stroke-width="1.3"/><circle cx="533.0" cy="215.0" r="2.9" fill="none" stroke="#8a14f0" stroke-width="1.4"/><circle cx="540.0" cy="215.1" r="2.9" fill="none" stroke="#8a14f0" stroke-width="1.4"/><circle cx="544.5" cy="215.3" r="2.9" fill="none" stroke="#8a14f0" stroke-width="1.4"/><circle cx="553.5" cy="215.8" r="2.9" fill="none" stroke="#8a14f0" stroke-width="1.4"/><circle cx="557.0" cy="216.0" r="2.9" fill="none" stroke="#8a14f0" stroke-width="1.4"/><circle cx="561.0" cy="216.0" r="2.9" fill="none" stroke="#8a14f0" stroke-width="1.4"/><circle cx="565.0" cy="216.3" r="2.9" fill="none" stroke="#8a14f0" stroke-width="1.4"/><circle cx="572.0" cy="217.4" r="2.9" fill="none" stroke="#8a14f0" stroke-width="1.4"/><circle cx="575.5" cy="218.1" r="2.9" fill="none" stroke="#8a14f0" stroke-width="1.4"/><circle cx="580.5" cy="219.1" r="2.9" fill="none" stroke="#8a14f0" stroke-width="1.4"/><circle cx="584.0" cy="219.6" r="2.9" fill="none" stroke="#8a14f0" stroke-width="1.4"/><circle cx="588.0" cy="220.0" r="2.9" fill="none" stroke="#8a14f0" stroke-width="1.4"/><circle cx="597.0" cy="220.8" r="2.9" fill="none" stroke="#8a14f0" stroke-width="1.4"/><circle cx="606.0" cy="223.3" r="2.9" fill="none" stroke="#8a14f0" stroke-width="1.4"/><circle cx="610.0" cy="224.5" r="2.9" fill="none" stroke="#8a14f0" stroke-width="1.4"/><circle cx="615.0" cy="225.6" r="2.9" fill="none" stroke="#8a14f0" stroke-width="1.4"/><circle cx="619.0" cy="226.0" r="2.9" fill="none" stroke="#8a14f0" stroke-width="1.4"/><circle cx="628.0" cy="227.7" r="2.9" fill="none" stroke="#8a14f0" stroke-width="1.4"/><circle cx="631.5" cy="229.2" r="2.9" fill="none" stroke="#8a14f0" stroke-width="1.4"/><circle cx="635.5" cy="231.3" r="2.9" fill="none" stroke="#8a14f0" stroke-width="1.4"/><circle cx="640.5" cy="233.7" r="2.9" fill="none" stroke="#8a14f0" stroke-width="1.4"/><circle cx="644.0" cy="235.0" r="2.9" fill="none" stroke="#8a14f0" stroke-width="1.4"/><circle cx="653.0" cy="236.2" r="2.9" fill="none" stroke="#8a14f0" stroke-width="1.4"/><circle cx="656.5" cy="236.8" r="2.9" fill="none" stroke="#8a14f0" stroke-width="1.4"/><circle cx="661.5" cy="238.1" r="2.9" fill="none" stroke="#8a14f0" stroke-width="1.4"/><circle cx="665.0" cy="239.1" r="2.9" fill="none" stroke="#8a14f0" stroke-width="1.4"/><circle cx="669.5" cy="239.9" r="2.9" fill="none" stroke="#8a14f0" stroke-width="1.4"/><circle cx="675.5" cy="240.0" r="2.9" fill="none" stroke="#8a14f0" stroke-width="1.4"/><circle cx="684.5" cy="240.0" r="2.9" fill="none" stroke="#8a14f0" stroke-width="1.4"/><circle cx="689.0" cy="240.0" r="2.9" fill="none" stroke="#8a14f0" stroke-width="1.4"/><circle cx="693.0" cy="240.0" r="2.9" fill="none" stroke="#8a14f0" stroke-width="1.4"/><circle cx="699.0" cy="240.0" r="2.9" fill="none" stroke="#8a14f0" stroke-width="1.4"/><circle cx="703.5" cy="240.0" r="2.9" fill="none" stroke="#8a14f0" stroke-width="1.4"/><circle cx="707.5" cy="239.9" r="2.9" fill="none" stroke="#8a14f0" stroke-width="1.4"/><circle cx="712.5" cy="239.1" r="2.9" fill="none" stroke="#8a14f0" stroke-width="1.4"/><circle cx="719.5" cy="237.1" r="2.9" fill="none" stroke="#8a14f0" stroke-width="1.4"/><circle cx="723.5" cy="235.6" r="2.9" fill="none" stroke="#8a14f0" stroke-width="1.4"/><circle cx="727.5" cy="234.3" r="2.9" fill="none" stroke="#8a14f0" stroke-width="1.4"/><circle cx="731.0" cy="233.2" r="2.9" fill="none" stroke="#8a14f0" stroke-width="1.4"/><circle cx="736.0" cy="232.3" r="2.9" fill="none" stroke="#8a14f0" stroke-width="1.4"/><circle cx="748.0" cy="230.5" r="2.9" fill="none" stroke="#8a14f0" stroke-width="1.4"/><circle cx="757.0" cy="226.6" r="2.9" fill="none" stroke="#8a14f0" stroke-width="1.4"/><circle cx="764.0" cy="223.9" r="2.9" fill="none" stroke="#8a14f0" stroke-width="1.4"/><circle cx="776.0" cy="222.4" r="2.9" fill="none" stroke="#8a14f0" stroke-width="1.4"/><circle cx="788.0" cy="219.1" r="2.9" fill="none" stroke="#8a14f0" stroke-width="1.4"/><circle cx="795.0" cy="217.4" r="2.9" fill="none" stroke="#8a14f0" stroke-width="1.4"/><circle cx="801.0" cy="217.0" r="2.9" fill="none" stroke="#8a14f0" stroke-width="1.4"/><circle cx="806.0" cy="217.2" r="2.9" fill="none" stroke="#8a14f0" stroke-width="1.4"/><circle cx="810.5" cy="217.5" r="2.9" fill="none" stroke="#8a14f0" stroke-width="1.4"/><circle cx="815.5" cy="217.9" r="2.9" fill="none" stroke="#8a14f0" stroke-width="1.4"/><circle cx="819.5" cy="218.0" r="2.9" fill="none" stroke="#8a14f0" stroke-width="1.4"/><circle cx="825.5" cy="218.6" r="2.9" fill="none" stroke="#8a14f0" stroke-width="1.4"/><circle cx="837.5" cy="222.6" r="2.9" fill="none" stroke="#8a14f0" stroke-width="1.4"/><circle cx="844.5" cy="224.6" r="2.9" fill="none" stroke="#8a14f0" stroke-width="1.4"/><circle cx="462" cy="291" r="3.2" fill="none" stroke="#2f8580" stroke-width="1.2"/><circle cx="531.0" cy="291.0" r="2.9" fill="none" stroke="#2f8580" stroke-width="1.3"/><circle cx="537.0" cy="291.4" r="2.9" fill="none" stroke="#2f8580" stroke-width="1.3"/><circle cx="541.0" cy="291.9" r="2.9" fill="none" stroke="#2f8580" stroke-width="1.3"/><circle cx="545.0" cy="292.5" r="2.9" fill="none" stroke="#2f8580" stroke-width="1.3"/><circle cx="554.0" cy="293.7" r="2.9" fill="none" stroke="#2f8580" stroke-width="1.3"/><circle cx="558.5" cy="294.0" r="2.9" fill="none" stroke="#2f8580" stroke-width="1.3"/><circle cx="565.5" cy="294.2" r="2.9" fill="none" stroke="#2f8580" stroke-width="1.3"/><circle cx="570.0" cy="294.5" r="2.9" fill="none" stroke="#2f8580" stroke-width="1.3"/><circle cx="582.0" cy="294.9" r="2.9" fill="none" stroke="#2f8580" stroke-width="1.3"/><circle cx="591.0" cy="293.2" r="2.9" fill="none" stroke="#2f8580" stroke-width="1.3"/><circle cx="594.5" cy="292.2" r="2.9" fill="none" stroke="#2f8580" stroke-width="1.3"/><circle cx="598.5" cy="290.9" r="2.9" fill="none" stroke="#2f8580" stroke-width="1.3"/><circle cx="605.5" cy="289.3" r="2.9" fill="none" stroke="#2f8580" stroke-width="1.3"/><circle cx="612.5" cy="288.9" r="2.9" fill="none" stroke="#2f8580" stroke-width="1.3"/><circle cx="619.5" cy="287.9" r="2.9" fill="none" stroke="#2f8580" stroke-width="1.3"/><circle cx="631.5" cy="284.9" r="2.9" fill="none" stroke="#2f8580" stroke-width="1.3"/><circle cx="643.5" cy="284.2" r="2.9" fill="none" stroke="#2f8580" stroke-width="1.3"/><circle cx="647.5" cy="284.6" r="2.9" fill="none" stroke="#2f8580" stroke-width="1.3"/><circle cx="651.5" cy="285.3" r="2.9" fill="none" stroke="#2f8580" stroke-width="1.3"/><circle cx="657.5" cy="286.4" r="2.9" fill="none" stroke="#2f8580" stroke-width="1.3"/><circle cx="669.5" cy="287.5" r="2.9" fill="none" stroke="#2f8580" stroke-width="1.3"/><circle cx="673.5" cy="288.6" r="2.9" fill="none" stroke="#2f8580" stroke-width="1.3"/><circle cx="677.0" cy="289.8" r="2.9" fill="none" stroke="#2f8580" stroke-width="1.3"/><circle cx="683.0" cy="291.9" r="2.9" fill="none" stroke="#2f8580" stroke-width="1.3"/><circle cx="695.0" cy="293.1" r="2.9" fill="none" stroke="#2f8580" stroke-width="1.3"/><circle cx="701.0" cy="293.6" r="2.9" fill="none" stroke="#2f8580" stroke-width="1.3"/><circle cx="710.0" cy="294.5" r="2.9" fill="none" stroke="#2f8580" stroke-width="1.3"/><circle cx="717.0" cy="294.9" r="2.9" fill="none" stroke="#2f8580" stroke-width="1.3"/><circle cx="720.5" cy="295.0" r="2.9" fill="none" stroke="#2f8580" stroke-width="1.3"/><circle cx="732.5" cy="292.5" r="2.9" fill="none" stroke="#2f8580" stroke-width="1.3"/><circle cx="739.5" cy="290.6" r="2.9" fill="none" stroke="#2f8580" stroke-width="1.3"/><circle cx="744.0" cy="290.0" r="2.9" fill="none" stroke="#2f8580" stroke-width="1.3"/><circle cx="748.0" cy="289.8" r="2.9" fill="none" stroke="#2f8580" stroke-width="1.3"/><circle cx="760.0" cy="286.5" r="2.9" fill="none" stroke="#2f8580" stroke-width="1.3"/><circle cx="763.5" cy="285.3" r="2.9" fill="none" stroke="#2f8580" stroke-width="1.3"/><circle cx="768.5" cy="283.8" r="2.9" fill="none" stroke="#2f8580" stroke-width="1.3"/><circle cx="774.5" cy="283.0" r="2.9" fill="none" stroke="#2f8580" stroke-width="1.3"/><circle cx="779.0" cy="283.2" r="2.9" fill="none" stroke="#2f8580" stroke-width="1.3"/><circle cx="784.0" cy="283.8" r="2.9" fill="none" stroke="#2f8580" stroke-width="1.3"/><circle cx="793.0" cy="285.0" r="2.9" fill="none" stroke="#2f8580" stroke-width="1.3"/><circle cx="802.0" cy="286.8" r="2.9" fill="none" stroke="#2f8580" stroke-width="1.3"/><circle cx="814.0" cy="293.6" r="2.9" fill="none" stroke="#2f8580" stroke-width="1.3"/><circle cx="818.0" cy="294.8" r="2.9" fill="none" stroke="#2f8580" stroke-width="1.3"/><circle cx="822.5" cy="295.2" r="2.9" fill="none" stroke="#2f8580" stroke-width="1.3"/><circle cx="834.5" cy="299.0" r="2.9" fill="none" stroke="#2f8580" stroke-width="1.3"/><circle cx="843.5" cy="302.3" r="2.9" fill="none" stroke="#2f8580" stroke-width="1.3"/><circle cx="849.5" cy="302.7" r="2.9" fill="none" stroke="#2f8580" stroke-width="1.3"/><circle cx="462" cy="345.5" r="3.2" fill="#c0c1c0" stroke="#2020e0" stroke-width="1.4"/><circle cx="849" cy="345.5" r="3.2" fill="#c0c1c0" stroke="#2020e0" stroke-width="1.4"/></svg>
<div class="t" style="left:454.5px;top:194px;color:#111;font-size:11px">[X]</div>
<div class="t" style="left:454.5px;top:268px;color:#111;font-size:11px">[Y]</div>
<div class="t" style="left:454.5px;top:321px;color:#111;font-size:11px">[Z]</div>
<div style="left:444px;top:417px;width:414px;height:1.5px;background:#dcdcdc"></div>
<div style="left:421px;top:418.5px;width:437px;height:17px;background:#333"></div>
<div style="left:444px;top:418.5px;width:414px;height:1.5px;background:#222"></div>
<div style="left:445px;top:421.5px;width:11px;height:11px;background:#262626;border-radius:50%;box-shadow:0 0 0 1px #1e1e1e"></div>
<svg style="left:448px;top:424px" width="6" height="6"><polygon points="5,0.5 5,5.5 1,3" fill="#555"/></svg>
<div style="left:461px;top:421.5px;width:397px;height:10.5px;background:#4a4a4a;border-radius:6px;box-shadow:0 0 0 1px #2a2a2a"></div>
<div style="left:464px;top:424px;width:5px;height:5px;background:#181818;border-radius:50%"></div>
<div style="left:98px;top:417px;width:346px;height:18px;background:#333"></div>
<div class="t" style="left:104.5px;top:421px;color:#ddd;font-size:10.6px">Track 8 [input] USB D1 In 1</div>
<div style="left:98px;top:435px;width:760px;height:45px;background:#333"></div>
<div style="left:100px;top:442px;width:56px;height:24px;background:linear-gradient(#3c3c3c,#2e2e2e);border:1px solid #1e1e1e;border-radius:12px;box-shadow:0 1px 2px rgba(0,0,0,.5)"></div>
<div style="left:128px;top:443px;width:1px;height:22px;background:#1e1e1e"></div>
<svg style="left:110px;top:448px" width="40" height="12"><g fill="#8a8a8a"><rect x="1" y="1" width="2.5" height="10"/><polygon points="3.5,6 11,1 11,11"/><polygon points="25.5,1 33,6 25.5,11"/><rect x="33" y="1" width="2.5" height="10"/></g></svg>
<div style="left:161px;top:439px;width:97px;height:29px;background:linear-gradient(#444,#2a2a2a);border:1px solid #1e1e1e;border-radius:15px;box-shadow:0 1px 2px rgba(0,0,0,.5)"></div>
<div style="left:191px;top:439px;width:37px;height:29px;background:linear-gradient(#b9c2c1,#8e9796);border-left:1px solid #222"></div>
<div style="left:228px;top:439px;width:30px;height:29px;background:linear-gradient(#cdd3d2,#a9b0af);border-radius:0 15px 15px 0;border-left:1px solid #444"></div>
<div style="left:173px;top:449px;width:9px;height:9px;background:#7e7e7e"></div>
<svg style="left:205px;top:449px" width="11" height="11"><polygon points="0.5,0 10,4.8 0.5,9.6" fill="#111"/></svg>
<div style="left:238.5px;top:450px;width:2px;height:8.5px;background:#111"></div>
<div style="left:242.5px;top:450px;width:2px;height:8.5px;background:#111"></div>
<div style="left:263px;top:439px;width:30px;height:30px;background:radial-gradient(circle,#6e3a26 0 4.6px,#d8c2b8 5px 7.8px,transparent 8.2px),linear-gradient(#7e4c3a 50%,#6b3a28 50%);border-radius:50%;box-shadow:0 0 0 1px #1e1e1e,0 1px 3px rgba(0,0,0,.6)"></div>
<div style="left:297px;top:441px;width:25px;height:25px;background:linear-gradient(#3a3a3a,#2a2a2a);border:1px solid #1e1e1e;border-radius:50%;box-shadow:0 1px 2px rgba(0,0,0,.5)"></div>
<svg style="left:301px;top:445px" width="17" height="17"><g fill="none" stroke="#8a8a8a" stroke-width="1.5"><path d="M3,10 A5.5,5.5 0 0 1 12,4"/><path d="M14,7 A5.5,5.5 0 0 1 5,13"/></g><polygon points="11,1.5 14.5,5 10,6" fill="#8a8a8a"/><polygon points="6,15.5 2.5,12 7,11" fill="#8a8a8a"/></svg>
<div style="left:330px;top:440px;width:50px;height:30px;background:#383838"></div>
<div style="left:332px;top:453px;width:46px;height:15px;background:#333"></div>
<svg style="left:333px;top:441px" width="14" height="11"><polyline points="1.5,9 6,2.5 9.5,7 12.5,4.5" fill="none" stroke="#aaa" stroke-width="1.3"/><circle cx="1.5" cy="9" r="1.3" fill="#aaa"/><circle cx="6" cy="2.5" r="1.3" fill="#aaa"/><circle cx="9.5" cy="7" r="1.3" fill="#aaa"/><circle cx="12.5" cy="4.5" r="1.3" fill="#aaa"/></svg>
<div class="t" style="left:347px;top:442px;color:#aaa;font-size:9px;font-weight:bold;letter-spacing:-0.3px">GLOBAL</div>
<div class="t" style="left:334px;top:456px;color:#999;font-size:9.5px;font-weight:bold">none</div>
<div style="left:365px;top:455px;width:11px;height:11px;border:1px solid #777;border-radius:50%"></div>
<svg style="left:367px;top:458px" width="8" height="6"><polygon points="0.5,0.5 6.5,0.5 3.5,5" fill="#888"/></svg>
<div style="left:536px;top:435px;width:322px;height:45px;background:#2a2a2a"></div>
<div style="left:536px;top:437px;width:322px;height:34px;background:#2c2c2c"></div>
<div class="t" style="left:545.5px;top:439px;color:#8e8e8e;font-size:31px;font-weight:bold;transform:scaleX(0.914);transform-origin:0 0">1.1.00 / 0:00.000</div>
<div class="t" style="left:801px;top:445.3px;color:#8a8a8a;font-size:19.5px;letter-spacing:0.6px">[Stopped]</div>
<div style="left:119px;top:477px;width:75px;height:1px;background:#4a4a4a"></div>
<div style="left:243px;top:477px;width:35px;height:1px;background:#4a4a4a"></div>
<div style="left:325px;top:477px;width:35px;height:1px;background:#4a4a4a"></div>
<div style="left:407px;top:477px;width:35px;height:1px;background:#4a4a4a"></div>
<div style="left:489px;top:477px;width:35px;height:1px;background:#4a4a4a"></div>
<div style="left:571px;top:477px;width:35px;height:1px;background:#4a4a4a"></div>
<div style="left:653px;top:477px;width:35px;height:1px;background:#4a4a4a"></div>
<div style="left:735px;top:477px;width:35px;height:1px;background:#4a4a4a"></div>
<div style="left:817px;top:477px;width:35px;height:1px;background:#4a4a4a"></div>
<div style="left:98px;top:480px;width:760px;height:260px;background:#333"></div>
<div style="left:101px;top:484px;width:23px;height:30px;background:#111;border-radius:2px"></div>
<div style="left:102px;top:485px;width:21px;height:11px;background:#b9c3c0"></div>
<div style="left:102px;top:496px;width:21px;height:17px;background:#a3b2b0"></div>
<div class="t" style="left:104px;top:502px;color:#333;font-size:9.5px;font-weight:bold">FX</div>
<svg style="left:113px;top:486px" width="10" height="10" viewBox="0 0 10 10"><path d="M2.7,2.8 A3.6,3.6 0 1 0 7.3,2.8" fill="none" stroke="#333" stroke-width="1.4"/><line x1="5" y1="0.8" x2="5" y2="5" stroke="#333" stroke-width="1.4"/></svg>
<div style="left:131px;top:484px;width:40px;height:30px;background:#151515;border-radius:2px"></div>
<div style="left:132px;top:485px;width:38px;height:11px;background:#2e2e2e"></div>
<div class="t" style="left:136px;top:486.5px;color:#10a050;font-size:8.5px;font-weight:bold">M</div>
<div class="t" style="left:148px;top:486.5px;color:#222;font-size:8.5px;font-weight:bold">R</div>
<div class="t" style="left:159px;top:486.5px;color:#1a8ab8;font-size:8.5px;font-weight:bold">S</div>
<div class="t" style="left:136.5px;top:501.5px;color:#ccc;font-size:9px;font-weight:bold;transform:scaleX(0.72);transform-origin:0 0">ROUTING</div>
<div style="left:177px;top:484px;width:38px;height:30px;background:#2a2a2a"></div>
<div style="left:179px;top:486px;width:34px;height:12px;background:#b3bfbd;border:1px solid #666"></div>
<svg style="left:185px;top:487px" width="22" height="10"><polygon points="1,1 8,4 8,6 1,9" fill="#6a7573"/><polygon points="21,1 14,4 14,6 21,9" fill="#6a7573"/></svg>
<div class="t" style="left:184px;top:501.5px;color:#bbb;font-size:9px;font-weight:bold;transform:scaleX(0.72);transform-origin:0 0">MONO</div>
<div class="t" style="left:136px;top:519px;color:#ccc;font-size:11px">MASTER</div>
<div style="left:98px;top:537px;width:121px;height:179px;background:#a2a9ab"></div>
<div style="left:149px;top:546px;width:18px;height:18px;background:radial-gradient(circle at 50% 35%,#fdfdfd,#c4c4c4 60%,#8a8a8a 90%);border-radius:50%;border:1px solid #666"></div>
<div style="left:157.5px;top:548px;width:1.5px;height:5px;background:#222"></div>
<svg style="left:102px;top:573px" width="100" height="137"><path d="M0,2 A2,2 0 0 1 2,0 H87 A2,2 0 0 1 89,2 V104 A14,14 0 0 0 101,118 V136 H2 A2,2 0 0 1 0,134 Z" fill="#222"/></svg>
<div style="left:187px;top:687px;width:22px;height:22px;background:#1a1a1a;border-radius:50%;box-shadow:0 1px 2px rgba(0,0,0,.5)"></div>
<svg style="left:188px;top:688px" width="20" height="20"><circle cx="10" cy="10" r="10" fill="#6a6a6a"/><g fill="#cfcfcf"><rect x="8.6" y="2.6" width="2.8" height="4" transform="rotate(0 10 10)"/><rect x="8.6" y="2.6" width="2.8" height="4" transform="rotate(45 10 10)"/><rect x="8.6" y="2.6" width="2.8" height="4" transform="rotate(90 10 10)"/><rect x="8.6" y="2.6" width="2.8" height="4" transform="rotate(135 10 10)"/><rect x="8.6" y="2.6" width="2.8" height="4" transform="rotate(180 10 10)"/><rect x="8.6" y="2.6" width="2.8" height="4" transform="rotate(225 10 10)"/><rect x="8.6" y="2.6" width="2.8" height="4" transform="rotate(270 10 10)"/><rect x="8.6" y="2.6" width="2.8" height="4" transform="rotate(315 10 10)"/><circle cx="10" cy="10" r="5.2"/></g><circle cx="10" cy="10" r="2.4" fill="#6a6a6a"/></svg>
<div style="left:195px;top:573px;width:19px;height:19px;background:linear-gradient(#f8f8f8,#dcdcdc);border:1px solid #555;border-radius:1px"></div>
<div class="t" style="left:199.5px;top:576.5px;color:#5a2a20;font-size:12px">M</div>
<div style="left:195px;top:599px;width:19px;height:19px;background:linear-gradient(#f8f8f8,#dcdcdc);border:1px solid #555;border-radius:1px"></div>
<div class="t" style="left:200.5px;top:602.5px;color:#4a5420;font-size:12px">S</div>
<div class="t" style="left:111px;top:577px;color:#858585;font-size:10px;font-weight:bold">-inf</div>
<div class="t" style="left:141px;top:577px;color:#858585;font-size:10px;font-weight:bold">-inf</div>
<div class="t" style="left:105px;top:587.5px;color:#858585;font-size:10px;font-weight:bold">12</div>
<div class="t" style="left:105px;top:598.9px;color:#858585;font-size:10px;font-weight:bold">6</div>
<div class="t" style="left:105px;top:610.3px;color:#858585;font-size:10px;font-weight:bold">0</div>
<div class="t" style="left:105px;top:621.7px;color:#858585;font-size:10px;font-weight:bold">6-</div>
<div class="t" style="left:105px;top:633.1px;color:#858585;font-size:10px;font-weight:bold">12-</div>
<div class="t" style="left:105px;top:644.5px;color:#858585;font-size:10px;font-weight:bold">18-</div>
<div class="t" style="left:105px;top:655.9px;color:#858585;font-size:10px;font-weight:bold">24-</div>
<div class="t" style="left:105px;top:667.3px;color:#858585;font-size:10px;font-weight:bold">30-</div>
<div class="t" style="left:105px;top:678.7px;color:#858585;font-size:10px;font-weight:bold">36-</div>
<div class="t" style="left:105px;top:690.1px;color:#858585;font-size:10px;font-weight:bold">42-</div>
<div class="t" style="left:151.8px;top:587.5px;color:#858585;font-size:10px;font-weight:bold">12</div>
<div class="t" style="left:157.4px;top:598.9px;color:#858585;font-size:10px;font-weight:bold">6</div>
<div class="t" style="left:157.4px;top:610.3px;color:#858585;font-size:10px;font-weight:bold">0</div>
<div class="t" style="left:151.8px;top:621.7px;color:#858585;font-size:10px;font-weight:bold">-6</div>
<div class="t" style="left:146.2px;top:633.1px;color:#858585;font-size:10px;font-weight:bold">-12</div>
<div class="t" style="left:146.2px;top:644.5px;color:#858585;font-size:10px;font-weight:bold">-18</div>
<div class="t" style="left:146.2px;top:655.9px;color:#858585;font-size:10px;font-weight:bold">-24</div>
<div class="t" style="left:146.2px;top:667.3px;color:#858585;font-size:10px;font-weight:bold">-30</div>
<div class="t" style="left:146.2px;top:678.7px;color:#858585;font-size:10px;font-weight:bold">-36</div>
<div class="t" style="left:146.2px;top:690.1px;color:#858585;font-size:10px;font-weight:bold">-42</div>
<div class="t" style="left:125.6px;top:595.0px;color:#858585;font-size:10px;font-weight:bold">-6-</div>
<div class="t" style="left:122.8px;top:618.0px;color:#858585;font-size:10px;font-weight:bold">-18-</div>
<div class="t" style="left:122.8px;top:641.0px;color:#858585;font-size:10px;font-weight:bold">-30-</div>
<div class="t" style="left:122.8px;top:664.0px;color:#858585;font-size:10px;font-weight:bold">-42-</div>
<div class="t" style="left:122.8px;top:687.0px;color:#858585;font-size:10px;font-weight:bold">-54-</div>
<div class="t" style="left:112px;top:695px;color:#858585;font-size:10px;font-weight:bold">-inf</div>
<div class="t" style="left:141px;top:695px;color:#858585;font-size:10px;font-weight:bold">-inf</div>
<div style="left:106px;top:607px;width:7px;height:9px;background:#10a060"></div>
<div style="left:157px;top:607px;width:7px;height:9px;background:#10a060"></div>
<div style="left:176px;top:584px;width:1.5px;height:116px;background:#111"></div>
<div style="left:167px;top:601px;width:20px;height:40px;background:linear-gradient(#d8d8d8 0,#f4f4f4 10%,#8a8a8a 22%,#4a4a4a 38%,#2e2e2e 47%,#0e0e0e 49%,#0e0e0e 52%,#e8e8e8 56%,#fafafa 62%,#9a9a9a 75%,#3a3a3a 95%);border:1px solid #0a0a0a;border-radius:2px"></div>
<div style="left:98px;top:716px;width:121px;height:1px;background:#2a2a2a"></div>
<div style="left:98px;top:717px;width:121px;height:18px;background:#858e8d"></div>
<div style="left:98px;top:711px;width:24px;height:24px;background:#6d7473;border-radius:0 5px 0 0"></div>
<div style="left:98px;top:735px;width:760px;height:5px;background:#555"></div>
<div style="left:98px;top:735px;width:7px;height:5px;background:#333"></div>
<div style="left:105px;top:735px;width:57px;height:5px;background:#dde3e3"></div>
<div style="left:219px;top:480px;width:1px;height:56px;background:#262626"></div>
<div style="left:226px;top:484px;width:23px;height:30px;background:#111;border-radius:2px"></div>
<div style="left:227px;top:485px;width:21px;height:11px;background:#b9c3c0"></div>
<div style="left:227px;top:496px;width:21px;height:17px;background:#00c060"></div>
<div class="t" style="left:229px;top:502px;color:#fff;font-size:9.5px;font-weight:bold">FX</div>
<svg style="left:238px;top:486px" width="10" height="10" viewBox="0 0 10 10"><path d="M2.7,2.8 A3.6,3.6 0 1 0 7.3,2.8" fill="none" stroke="#1a9a50" stroke-width="1.4"/><line x1="5" y1="0.8" x2="5" y2="5" stroke="#1a9a50" stroke-width="1.4"/></svg>
<div style="left:255px;top:484px;width:40px;height:30px;background:#151515;border-radius:2px"></div>
<div style="left:256px;top:485px;width:38px;height:11px;background:#2e2e2e"></div>
<div class="t" style="left:260px;top:486.5px;color:#222;font-size:8.5px;font-weight:bold">M</div>
<div class="t" style="left:272px;top:486.5px;color:#c8c800;font-size:8.5px;font-weight:bold">R</div>
<div class="t" style="left:283px;top:486.5px;color:#1a8ab8;font-size:8.5px;font-weight:bold">S</div>
<div class="t" style="left:260.5px;top:501.5px;color:#ccc;font-size:9px;font-weight:bold;transform:scaleX(0.72);transform-origin:0 0">ROUTING</div>
<div class="t" style="left:220px;top:519px;width:81px;text-align:center;color:#ccc;font-size:11px">DECODER</div>
<div style="left:220px;top:537px;width:81px;height:180px;background:#86a8c9"></div>
<div style="left:219px;top:537px;width:1px;height:180px;background:#2a2a2a"></div>
<div style="left:251px;top:546px;width:18px;height:18px;background:radial-gradient(circle at 50% 35%,#fdfdfd,#c4c4c4 60%,#8a8a8a 90%);border-radius:50%;border:1px solid #666"></div>
<div style="left:259.5px;top:548px;width:1.5px;height:5px;background:#222"></div>
<svg style="left:220px;top:573px" width="70" height="137"><path d="M0,0 H52 A2,2 0 0 1 54,2 V104 A14,14 0 0 0 66,118 V136 H0 Z" fill="#222"/></svg>
<div style="left:270px;top:687px;width:22px;height:22px;background:#1a1a1a;border-radius:50%;box-shadow:0 1px 2px rgba(0,0,0,.5)"></div>
<div style="left:271px;top:688px;width:20px;height:20px;background:radial-gradient(circle,transparent 0 4px,#c9ada2 4.4px 5.8px,transparent 6.2px),linear-gradient(#7e4e3c 50%,#6a3a28 50%);border-radius:50%"></div>
<div style="left:278px;top:573px;width:19px;height:19px;background:linear-gradient(#f8f8f8,#dcdcdc);border:1px solid #555;border-radius:1px"></div>
<div class="t" style="left:282.5px;top:576.5px;color:#5a2a20;font-size:12px">M</div>
<div style="left:278px;top:599px;width:19px;height:19px;background:linear-gradient(#f8f8f8,#dcdcdc);border:1px solid #555;border-radius:1px"></div>
<div class="t" style="left:283.5px;top:602.5px;color:#4a5420;font-size:12px">S</div>
<svg style="left:280px;top:648px" width="17" height="38"><path d="M0,0 H16 V16 A8,8 0 0 1 8,24 A8,8 0 0 1 0,16 Z" fill="rgba(105,115,115,.6)"/><path d="M7,24 V31 L5,30 L6.5,36 L11,31 L9,31.5 V24 Z" fill="rgba(105,115,115,.6)"/></svg>
<div style="left:282px;top:659.5px;width:12px;height:12px;border:1.5px solid rgba(255,255,255,.55);border-radius:50%"></div>
<svg style="left:284.5px;top:663px" width="8" height="6"><polygon points="0.5,0.5 6.5,0.5 3.5,5" fill="rgba(255,255,255,.55)"/></svg>
<div class="t" style="left:226px;top:636px;color:#858585;font-size:10px;font-weight:bold">-inf</div>
<div style="left:243px;top:575px;width:1.5px;height:130px;background:#444"></div>
<div style="left:259px;top:583px;width:1.5px;height:117px;background:#111"></div>
<div style="left:249px;top:601px;width:20px;height:40px;background:linear-gradient(#d8d8d8 0,#f4f4f4 10%,#8a8a8a 22%,#4a4a4a 38%,#2e2e2e 47%,#0e0e0e 49%,#0e0e0e 52%,#e8e8e8 56%,#fafafa 62%,#9a9a9a 75%,#3a3a3a 95%);border:1px solid #0a0a0a;border-radius:2px"></div>
<div style="left:219px;top:716px;width:82px;height:1px;background:#2a2a2a"></div>
<div style="left:220px;top:717px;width:81px;height:18px;background:#1a80f0"></div>
<div class="t" style="left:220px;top:721px;width:81px;text-align:center;color:#fff;font-size:10px">1</div>
<div style="left:301px;top:480px;width:1px;height:56px;background:#262626"></div>
<div style="left:308px;top:484px;width:23px;height:30px;background:#111;border-radius:2px"></div>
<div style="left:309px;top:485px;width:21px;height:11px;background:#b9c3c0"></div>
<div style="left:309px;top:496px;width:21px;height:17px;background:#00c060"></div>
<div class="t" style="left:311px;top:502px;color:#fff;font-size:9.5px;font-weight:bold">FX</div>
<svg style="left:320px;top:486px" width="10" height="10" viewBox="0 0 10 10"><path d="M2.7,2.8 A3.6,3.6 0 1 0 7.3,2.8" fill="none" stroke="#1a9a50" stroke-width="1.4"/><line x1="5" y1="0.8" x2="5" y2="5" stroke="#1a9a50" stroke-width="1.4"/></svg>
<div style="left:337px;top:484px;width:40px;height:30px;background:#151515;border-radius:2px"></div>
<div style="left:338px;top:485px;width:38px;height:11px;background:#2e2e2e"></div>
<div class="t" style="left:342px;top:486.5px;color:#222;font-size:8.5px;font-weight:bold">M</div>
<div class="t" style="left:354px;top:486.5px;color:#c8c800;font-size:8.5px;font-weight:bold">R</div>
<div class="t" style="left:365px;top:486.5px;color:#1a8ab8;font-size:8.5px;font-weight:bold">S</div>
<div class="t" style="left:342.5px;top:501.5px;color:#ccc;font-size:9px;font-weight:bold;transform:scaleX(0.72);transform-origin:0 0">ROUTING</div>
<div class="t" style="left:302px;top:519px;width:81px;text-align:center;color:#ccc;font-size:11px">Binaural</div>
<div style="left:302px;top:537px;width:81px;height:180px;background:#86a8c9"></div>
<div style="left:301px;top:537px;width:1px;height:180px;background:#2a2a2a"></div>
<div style="left:333px;top:546px;width:18px;height:18px;background:radial-gradient(circle at 50% 35%,#fdfdfd,#c4c4c4 60%,#8a8a8a 90%);border-radius:50%;border:1px solid #666"></div>
<div style="left:341.5px;top:548px;width:1.5px;height:5px;background:#222"></div>
<svg style="left:302px;top:573px" width="70" height="137"><path d="M0,0 H52 A2,2 0 0 1 54,2 V104 A14,14 0 0 0 66,118 V136 H0 Z" fill="#222"/></svg>
<div style="left:352px;top:687px;width:22px;height:22px;background:#1a1a1a;border-radius:50%;box-shadow:0 1px 2px rgba(0,0,0,.5)"></div>
<div style="left:353px;top:688px;width:20px;height:20px;background:radial-gradient(circle,transparent 0 4px,#c9ada2 4.4px 5.8px,transparent 6.2px),linear-gradient(#7e4e3c 50%,#6a3a28 50%);border-radius:50%"></div>
<div style="left:360px;top:573px;width:19px;height:19px;background:linear-gradient(#f8f8f8,#dcdcdc);border:1px solid #555;border-radius:1px"></div>
<div style="left:360px;top:573px;width:19px;height:19px;background:#f04420;border:1px solid #555"></div>
<div class="t" style="left:364.5px;top:576.5px;color:#fff;font-size:12px">M</div>
<div style="left:311px;top:577px;width:11px;height:10px;background:#c02020;border:1px solid #600"></div>
<div class="t" style="left:313px;top:579px;color:#fff;font-size:6px;font-weight:bold">M</div>
<div style="left:360px;top:599px;width:19px;height:19px;background:linear-gradient(#f8f8f8,#dcdcdc);border:1px solid #555;border-radius:1px"></div>
<div class="t" style="left:365.5px;top:602.5px;color:#4a5420;font-size:12px">S</div>
<svg style="left:362px;top:648px" width="17" height="38"><path d="M0,0 H16 V16 A8,8 0 0 1 8,24 A8,8 0 0 1 0,16 Z" fill="rgba(105,115,115,.6)"/><path d="M7,24 V31 L5,30 L6.5,36 L11,31 L9,31.5 V24 Z" fill="rgba(105,115,115,.6)"/></svg>
<div style="left:364px;top:659.5px;width:12px;height:12px;border:1.5px solid rgba(255,255,255,.55);border-radius:50%"></div>
<svg style="left:366.5px;top:663px" width="8" height="6"><polygon points="0.5,0.5 6.5,0.5 3.5,5" fill="rgba(255,255,255,.55)"/></svg>
<div class="t" style="left:310px;top:595px;color:#858585;font-size:10px;font-weight:bold">-6-</div>
<div class="t" style="left:307px;top:617.5px;color:#858585;font-size:10px;font-weight:bold">-18-</div>
<div class="t" style="left:307px;top:640.5px;color:#858585;font-size:10px;font-weight:bold">-30-</div>
<div class="t" style="left:307px;top:664px;color:#858585;font-size:10px;font-weight:bold">-42-</div>
<div class="t" style="left:307px;top:687px;color:#858585;font-size:10px;font-weight:bold">-54-</div>
<div style="left:341px;top:583px;width:1.5px;height:117px;background:#111"></div>
<div style="left:331px;top:601px;width:20px;height:40px;background:linear-gradient(#d8d8d8 0,#f4f4f4 10%,#8a8a8a 22%,#4a4a4a 38%,#2e2e2e 47%,#0e0e0e 49%,#0e0e0e 52%,#e8e8e8 56%,#fafafa 62%,#9a9a9a 75%,#3a3a3a 95%);border:1px solid #0a0a0a;border-radius:2px"></div>
<div style="left:301px;top:716px;width:82px;height:1px;background:#2a2a2a"></div>
<div style="left:302px;top:717px;width:81px;height:18px;background:#1a80f0"></div>
<div class="t" style="left:302px;top:721px;width:81px;text-align:center;color:#fff;font-size:10px">2</div>
<div style="left:383px;top:480px;width:1px;height:56px;background:#262626"></div>
<div style="left:390px;top:484px;width:23px;height:30px;background:#111;border-radius:2px"></div>
<div style="left:391px;top:485px;width:21px;height:11px;background:#b9c3c0"></div>
<div style="left:391px;top:496px;width:21px;height:17px;background:#a3b2b0"></div>
<div class="t" style="left:393px;top:502px;color:#333;font-size:9.5px;font-weight:bold">FX</div>
<svg style="left:402px;top:486px" width="10" height="10" viewBox="0 0 10 10"><path d="M2.7,2.8 A3.6,3.6 0 1 0 7.3,2.8" fill="none" stroke="#333" stroke-width="1.4"/><line x1="5" y1="0.8" x2="5" y2="5" stroke="#333" stroke-width="1.4"/></svg>
<div style="left:419px;top:484px;width:40px;height:30px;background:#151515;border-radius:2px"></div>
<div style="left:420px;top:485px;width:38px;height:11px;background:#2e2e2e"></div>
<div class="t" style="left:424px;top:486.5px;color:#222;font-size:8.5px;font-weight:bold">M</div>
<div class="t" style="left:436px;top:486.5px;color:#c8c800;font-size:8.5px;font-weight:bold">R</div>
<div class="t" style="left:447px;top:486.5px;color:#1a8ab8;font-size:8.5px;font-weight:bold">S</div>
<div class="t" style="left:424.5px;top:501.5px;color:#ccc;font-size:9px;font-weight:bold;transform:scaleX(0.72);transform-origin:0 0">ROUTING</div>
<div class="t" style="left:384px;top:519px;width:81px;text-align:center;color:#ccc;font-size:11px">Bformat_03</div>
<div style="left:384px;top:537px;width:81px;height:180px;background:#c08b8a"></div>
<div style="left:383px;top:537px;width:1px;height:180px;background:#2a2a2a"></div>
<div style="left:415px;top:546px;width:18px;height:18px;background:radial-gradient(circle at 50% 35%,#fdfdfd,#c4c4c4 60%,#8a8a8a 90%);border-radius:50%;border:1px solid #666"></div>
<div style="left:423.5px;top:548px;width:1.5px;height:5px;background:#222"></div>
<svg style="left:384px;top:573px" width="70" height="137"><path d="M0,0 H52 A2,2 0 0 1 54,2 V104 A14,14 0 0 0 66,118 V136 H0 Z" fill="#222"/></svg>
<div style="left:434px;top:687px;width:22px;height:22px;background:#1a1a1a;border-radius:50%;box-shadow:0 1px 2px rgba(0,0,0,.5)"></div>
<div style="left:435px;top:688px;width:20px;height:20px;background:radial-gradient(circle,transparent 0 4px,#c9ada2 4.4px 5.8px,transparent 6.2px),linear-gradient(#7e4e3c 50%,#6a3a28 50%);border-radius:50%"></div>
<div style="left:442px;top:573px;width:19px;height:19px;background:linear-gradient(#f8f8f8,#dcdcdc);border:1px solid #555;border-radius:1px"></div>
<div class="t" style="left:446.5px;top:576.5px;color:#5a2a20;font-size:12px">M</div>
<div style="left:442px;top:599px;width:19px;height:19px;background:linear-gradient(#f8f8f8,#dcdcdc);border:1px solid #555;border-radius:1px"></div>
<div class="t" style="left:447.5px;top:602.5px;color:#4a5420;font-size:12px">S</div>
<svg style="left:444px;top:648px" width="17" height="38"><path d="M0,0 H16 V16 A8,8 0 0 1 8,24 A8,8 0 0 1 0,16 Z" fill="rgba(105,115,115,.6)"/><path d="M7,24 V31 L5,30 L6.5,36 L11,31 L9,31.5 V24 Z" fill="rgba(105,115,115,.6)"/></svg>
<div class="t" style="left:446.5px;top:650.5px;color:rgba(255,255,255,.7);font-size:8.5px;font-weight:bold">IN</div>
<div style="left:446px;top:659.5px;width:12px;height:12px;border:1.5px solid rgba(255,255,255,.55);border-radius:50%"></div>
<svg style="left:448.5px;top:663px" width="8" height="6"><polygon points="0.5,0.5 6.5,0.5 3.5,5" fill="rgba(255,255,255,.55)"/></svg>
<div class="t" style="left:390px;top:577px;color:#858585;font-size:10px;font-weight:bold">-inf</div>
<div class="t" style="left:392px;top:595px;color:#858585;font-size:10px;font-weight:bold">-6-</div>
<div class="t" style="left:389px;top:617.5px;color:#858585;font-size:10px;font-weight:bold">-18-</div>
<div class="t" style="left:389px;top:640.5px;color:#858585;font-size:10px;font-weight:bold">-30-</div>
<div class="t" style="left:389px;top:664px;color:#858585;font-size:10px;font-weight:bold">-42-</div>
<div class="t" style="left:389px;top:687px;color:#858585;font-size:10px;font-weight:bold">-54-</div>
<div style="left:423px;top:583px;width:1.5px;height:117px;background:#111"></div>
<div style="left:413px;top:601px;width:20px;height:40px;background:linear-gradient(#d8d8d8 0,#f4f4f4 10%,#8a8a8a 22%,#4a4a4a 38%,#2e2e2e 47%,#0e0e0e 49%,#0e0e0e 52%,#e8e8e8 56%,#fafafa 62%,#9a9a9a 75%,#3a3a3a 95%);border:1px solid #0a0a0a;border-radius:2px"></div>
<div style="left:383px;top:716px;width:82px;height:1px;background:#2a2a2a"></div>
<div style="left:384px;top:717px;width:81px;height:18px;background:#ff0a0a"></div>
<div class="t" style="left:384px;top:721px;width:81px;text-align:center;color:#fff;font-size:10px">3</div>
<div style="left:465px;top:480px;width:1px;height:56px;background:#262626"></div>
<div style="left:472px;top:484px;width:23px;height:30px;background:#111;border-radius:2px"></div>
<div style="left:473px;top:485px;width:21px;height:11px;background:#b9c3c0"></div>
<div style="left:473px;top:496px;width:21px;height:17px;background:#00c060"></div>
<div class="t" style="left:475px;top:502px;color:#fff;font-size:9.5px;font-weight:bold">FX</div>
<svg style="left:484px;top:486px" width="10" height="10" viewBox="0 0 10 10"><path d="M2.7,2.8 A3.6,3.6 0 1 0 7.3,2.8" fill="none" stroke="#1a9a50" stroke-width="1.4"/><line x1="5" y1="0.8" x2="5" y2="5" stroke="#1a9a50" stroke-width="1.4"/></svg>
<div style="left:501px;top:484px;width:40px;height:30px;background:#151515;border-radius:2px"></div>
<div style="left:502px;top:485px;width:38px;height:11px;background:#2e2e2e"></div>
<div class="t" style="left:506px;top:486.5px;color:#222;font-size:8.5px;font-weight:bold">M</div>
<div class="t" style="left:518px;top:486.5px;color:#222;font-size:8.5px;font-weight:bold">R</div>
<div class="t" style="left:529px;top:486.5px;color:#1a8ab8;font-size:8.5px;font-weight:bold">S</div>
<div class="t" style="left:506.5px;top:501.5px;color:#ccc;font-size:9px;font-weight:bold;transform:scaleX(0.72);transform-origin:0 0">ROUTING</div>
<div class="t" style="left:466px;top:519px;width:81px;text-align:center;color:#ccc;font-size:11px">Source_01</div>
<div style="left:466px;top:537px;width:81px;height:180px;background:#8ea996"></div>
<div style="left:465px;top:537px;width:1px;height:180px;background:#2a2a2a"></div>
<div style="left:497px;top:546px;width:18px;height:18px;background:radial-gradient(circle at 50% 35%,#fdfdfd,#c4c4c4 60%,#8a8a8a 90%);border-radius:50%;border:1px solid #666"></div>
<div style="left:505.5px;top:548px;width:1.5px;height:5px;background:#222"></div>
<svg style="left:466px;top:573px" width="70" height="137"><path d="M0,0 H52 A2,2 0 0 1 54,2 V104 A14,14 0 0 0 66,118 V136 H0 Z" fill="#222"/></svg>
<div style="left:516px;top:687px;width:22px;height:22px;background:#1a1a1a;border-radius:50%;box-shadow:0 1px 2px rgba(0,0,0,.5)"></div>
<div style="left:517px;top:688px;width:20px;height:20px;background:radial-gradient(circle,transparent 0 4px,#c9ada2 4.4px 5.8px,transparent 6.2px),linear-gradient(#7e4e3c 50%,#6a3a28 50%);border-radius:50%"></div>
<div style="left:524px;top:573px;width:19px;height:19px;background:linear-gradient(#f8f8f8,#dcdcdc);border:1px solid #555;border-radius:1px"></div>
<div class="t" style="left:528.5px;top:576.5px;color:#5a2a20;font-size:12px">M</div>
<div style="left:524px;top:599px;width:19px;height:19px;background:linear-gradient(#f8f8f8,#dcdcdc);border:1px solid #555;border-radius:1px"></div>
<div class="t" style="left:529.5px;top:602.5px;color:#4a5420;font-size:12px">S</div>
<svg style="left:526px;top:648px" width="17" height="38"><path d="M0,0 H16 V16 A8,8 0 0 1 8,24 A8,8 0 0 1 0,16 Z" fill="rgba(105,115,115,.6)"/><path d="M7,24 V31 L5,30 L6.5,36 L11,31 L9,31.5 V24 Z" fill="rgba(105,115,115,.6)"/></svg>
<div class="t" style="left:528.5px;top:650.5px;color:rgba(255,255,255,.7);font-size:8.5px;font-weight:bold">IN</div>
<div style="left:528px;top:659.5px;width:12px;height:12px;border:1.5px solid rgba(255,255,255,.55);border-radius:50%"></div>
<svg style="left:530.5px;top:663px" width="8" height="6"><polygon points="0.5,0.5 6.5,0.5 3.5,5" fill="rgba(255,255,255,.55)"/></svg>
<div class="t" style="left:472px;top:577px;color:#858585;font-size:10px;font-weight:bold">-inf</div>
<div class="t" style="left:474px;top:595px;color:#858585;font-size:10px;font-weight:bold">-6-</div>
<div class="t" style="left:471px;top:617.5px;color:#858585;font-size:10px;font-weight:bold">-18-</div>
<div class="t" style="left:471px;top:640.5px;color:#858585;font-size:10px;font-weight:bold">-30-</div>
<div class="t" style="left:471px;top:664px;color:#858585;font-size:10px;font-weight:bold">-42-</div>
<div class="t" style="left:471px;top:687px;color:#858585;font-size:10px;font-weight:bold">-54-</div>
<div style="left:505px;top:583px;width:1.5px;height:117px;background:#111"></div>
<div style="left:495px;top:601px;width:20px;height:40px;background:linear-gradient(#d8d8d8 0,#f4f4f4 10%,#8a8a8a 22%,#4a4a4a 38%,#2e2e2e 47%,#0e0e0e 49%,#0e0e0e 52%,#e8e8e8 56%,#fafafa 62%,#9a9a9a 75%,#3a3a3a 95%);border:1px solid #0a0a0a;border-radius:2px"></div>
<div style="left:465px;top:716px;width:82px;height:1px;background:#2a2a2a"></div>
<div style="left:466px;top:717px;width:81px;height:18px;background:#2f7d32"></div>
<div class="t" style="left:466px;top:721px;width:81px;text-align:center;color:#fff;font-size:10px">4</div>
<div style="left:547px;top:480px;width:1px;height:56px;background:#262626"></div>
<div style="left:554px;top:484px;width:23px;height:30px;background:#111;border-radius:2px"></div>
<div style="left:555px;top:485px;width:21px;height:11px;background:#b9c3c0"></div>
<div style="left:555px;top:496px;width:21px;height:17px;background:#00c060"></div>
<div class="t" style="left:557px;top:502px;color:#fff;font-size:9.5px;font-weight:bold">FX</div>
<svg style="left:566px;top:486px" width="10" height="10" viewBox="0 0 10 10"><path d="M2.7,2.8 A3.6,3.6 0 1 0 7.3,2.8" fill="none" stroke="#1a9a50" stroke-width="1.4"/><line x1="5" y1="0.8" x2="5" y2="5" stroke="#1a9a50" stroke-width="1.4"/></svg>
<div style="left:583px;top:484px;width:40px;height:30px;background:#151515;border-radius:2px"></div>
<div style="left:584px;top:485px;width:38px;height:11px;background:#2e2e2e"></div>
<div class="t" style="left:588px;top:486.5px;color:#222;font-size:8.5px;font-weight:bold">M</div>
<div class="t" style="left:600px;top:486.5px;color:#222;font-size:8.5px;font-weight:bold">R</div>
<div class="t" style="left:611px;top:486.5px;color:#1a8ab8;font-size:8.5px;font-weight:bold">S</div>
<div class="t" style="left:588.5px;top:501.5px;color:#ccc;font-size:9px;font-weight:bold;transform:scaleX(0.72);transform-origin:0 0">ROUTING</div>
<div class="t" style="left:548px;top:519px;width:81px;text-align:center;color:#ccc;font-size:11px">Source_02</div>
<div style="left:548px;top:537px;width:81px;height:180px;background:#8ea996"></div>
<div style="left:547px;top:537px;width:1px;height:180px;background:#2a2a2a"></div>
<div style="left:579px;top:546px;width:18px;height:18px;background:radial-gradient(circle at 50% 35%,#fdfdfd,#c4c4c4 60%,#8a8a8a 90%);border-radius:50%;border:1px solid #666"></div>
<div style="left:587.5px;top:548px;width:1.5px;height:5px;background:#222"></div>
<svg style="left:548px;top:573px" width="70" height="137"><path d="M0,0 H52 A2,2 0 0 1 54,2 V104 A14,14 0 0 0 66,118 V136 H0 Z" fill="#222"/></svg>
<div style="left:598px;top:687px;width:22px;height:22px;background:#1a1a1a;border-radius:50%;box-shadow:0 1px 2px rgba(0,0,0,.5)"></div>
<div style="left:599px;top:688px;width:20px;height:20px;background:radial-gradient(circle,transparent 0 4px,#c9ada2 4.4px 5.8px,transparent 6.2px),linear-gradient(#7e4e3c 50%,#6a3a28 50%);border-radius:50%"></div>
<div style="left:606px;top:573px;width:19px;height:19px;background:linear-gradient(#f8f8f8,#dcdcdc);border:1px solid #555;border-radius:1px"></div>
<div class="t" style="left:610.5px;top:576.5px;color:#5a2a20;font-size:12px">M</div>
<div style="left:606px;top:599px;width:19px;height:19px;background:linear-gradient(#f8f8f8,#dcdcdc);border:1px solid #555;border-radius:1px"></div>
<div class="t" style="left:611.5px;top:602.5px;color:#4a5420;font-size:12px">S</div>
<svg style="left:608px;top:648px" width="17" height="38"><path d="M0,0 H16 V16 A8,8 0 0 1 8,24 A8,8 0 0 1 0,16 Z" fill="rgba(105,115,115,.6)"/><path d="M7,24 V31 L5,30 L6.5,36 L11,31 L9,31.5 V24 Z" fill="rgba(105,115,115,.6)"/></svg>
<div class="t" style="left:610.5px;top:650.5px;color:rgba(255,255,255,.7);font-size:8.5px;font-weight:bold">IN</div>
<div style="left:610px;top:659.5px;width:12px;height:12px;border:1.5px solid rgba(255,255,255,.55);border-radius:50%"></div>
<svg style="left:612.5px;top:663px" width="8" height="6"><polygon points="0.5,0.5 6.5,0.5 3.5,5" fill="rgba(255,255,255,.55)"/></svg>
<div class="t" style="left:554px;top:577px;color:#858585;font-size:10px;font-weight:bold">-inf</div>
<div class="t" style="left:556px;top:595px;color:#858585;font-size:10px;font-weight:bold">-6-</div>
<div class="t" style="left:553px;top:617.5px;color:#858585;font-size:10px;font-weight:bold">-18-</div>
<div class="t" style="left:553px;top:640.5px;color:#858585;font-size:10px;font-weight:bold">-30-</div>
<div class="t" style="left:553px;top:664px;color:#858585;font-size:10px;font-weight:bold">-42-</div>
<div class="t" style="left:553px;top:687px;color:#858585;font-size:10px;font-weight:bold">-54-</div>
<div style="left:587px;top:583px;width:1.5px;height:117px;background:#111"></div>
<div style="left:577px;top:601px;width:20px;height:40px;background:linear-gradient(#d8d8d8 0,#f4f4f4 10%,#8a8a8a 22%,#4a4a4a 38%,#2e2e2e 47%,#0e0e0e 49%,#0e0e0e 52%,#e8e8e8 56%,#fafafa 62%,#9a9a9a 75%,#3a3a3a 95%);border:1px solid #0a0a0a;border-radius:2px"></div>
<div style="left:547px;top:716px;width:82px;height:1px;background:#2a2a2a"></div>
<div style="left:548px;top:717px;width:81px;height:18px;background:#2f7d32"></div>
<div class="t" style="left:548px;top:721px;width:81px;text-align:center;color:#fff;font-size:10px">5</div>
<div style="left:629px;top:480px;width:1px;height:56px;background:#262626"></div>
<div style="left:636px;top:484px;width:23px;height:30px;background:#111;border-radius:2px"></div>
<div style="left:637px;top:485px;width:21px;height:11px;background:#b9c3c0"></div>
<div style="left:637px;top:496px;width:21px;height:17px;background:#00c060"></div>
<div class="t" style="left:639px;top:502px;color:#fff;font-size:9.5px;font-weight:bold">FX</div>
<svg style="left:648px;top:486px" width="10" height="10" viewBox="0 0 10 10"><path d="M2.7,2.8 A3.6,3.6 0 1 0 7.3,2.8" fill="none" stroke="#1a9a50" stroke-width="1.4"/><line x1="5" y1="0.8" x2="5" y2="5" stroke="#1a9a50" stroke-width="1.4"/></svg>
<div style="left:665px;top:484px;width:40px;height:30px;background:#151515;border-radius:2px"></div>
<div style="left:666px;top:485px;width:38px;height:11px;background:#2e2e2e"></div>
<div class="t" style="left:670px;top:486.5px;color:#222;font-size:8.5px;font-weight:bold">M</div>
<div class="t" style="left:682px;top:486.5px;color:#222;font-size:8.5px;font-weight:bold">R</div>
<div class="t" style="left:693px;top:486.5px;color:#1a8ab8;font-size:8.5px;font-weight:bold">S</div>
<div class="t" style="left:670.5px;top:501.5px;color:#ccc;font-size:9px;font-weight:bold;transform:scaleX(0.72);transform-origin:0 0">ROUTING</div>
<div class="t" style="left:630px;top:519px;width:81px;text-align:center;color:#ccc;font-size:11px">Source_03</div>
<div style="left:630px;top:537px;width:81px;height:180px;background:#8ea996"></div>
<div style="left:629px;top:537px;width:1px;height:180px;background:#2a2a2a"></div>
<div style="left:661px;top:546px;width:18px;height:18px;background:radial-gradient(circle at 50% 35%,#fdfdfd,#c4c4c4 60%,#8a8a8a 90%);border-radius:50%;border:1px solid #666"></div>
<div style="left:669.5px;top:548px;width:1.5px;height:5px;background:#222"></div>
<svg style="left:630px;top:573px" width="70" height="137"><path d="M0,0 H52 A2,2 0 0 1 54,2 V104 A14,14 0 0 0 66,118 V136 H0 Z" fill="#222"/></svg>
<div style="left:680px;top:687px;width:22px;height:22px;background:#1a1a1a;border-radius:50%;box-shadow:0 1px 2px rgba(0,0,0,.5)"></div>
<div style="left:681px;top:688px;width:20px;height:20px;background:radial-gradient(circle,transparent 0 4px,#c9ada2 4.4px 5.8px,transparent 6.2px),linear-gradient(#7e4e3c 50%,#6a3a28 50%);border-radius:50%"></div>
<div style="left:688px;top:573px;width:19px;height:19px;background:linear-gradient(#f8f8f8,#dcdcdc);border:1px solid #555;border-radius:1px"></div>
<div class="t" style="left:692.5px;top:576.5px;color:#5a2a20;font-size:12px">M</div>
<div style="left:688px;top:599px;width:19px;height:19px;background:linear-gradient(#f8f8f8,#dcdcdc);border:1px solid #555;border-radius:1px"></div>
<div class="t" style="left:693.5px;top:602.5px;color:#4a5420;font-size:12px">S</div>
<svg style="left:690px;top:648px" width="17" height="38"><path d="M0,0 H16 V16 A8,8 0 0 1 8,24 A8,8 0 0 1 0,16 Z" fill="rgba(105,115,115,.6)"/><path d="M7,24 V31 L5,30 L6.5,36 L11,31 L9,31.5 V24 Z" fill="rgba(105,115,115,.6)"/></svg>
<div class="t" style="left:692.5px;top:650.5px;color:rgba(255,255,255,.7);font-size:8.5px;font-weight:bold">IN</div>
<div style="left:692px;top:659.5px;width:12px;height:12px;border:1.5px solid rgba(255,255,255,.55);border-radius:50%"></div>
<svg style="left:694.5px;top:663px" width="8" height="6"><polygon points="0.5,0.5 6.5,0.5 3.5,5" fill="rgba(255,255,255,.55)"/></svg>
<div class="t" style="left:636px;top:577px;color:#858585;font-size:10px;font-weight:bold">-inf</div>
<div class="t" style="left:638px;top:595px;color:#858585;font-size:10px;font-weight:bold">-6-</div>
<div class="t" style="left:635px;top:617.5px;color:#858585;font-size:10px;font-weight:bold">-18-</div>
<div class="t" style="left:635px;top:640.5px;color:#858585;font-size:10px;font-weight:bold">-30-</div>
<div class="t" style="left:635px;top:664px;color:#858585;font-size:10px;font-weight:bold">-42-</div>
<div class="t" style="left:635px;top:687px;color:#858585;font-size:10px;font-weight:bold">-54-</div>
<div style="left:669px;top:583px;width:1.5px;height:117px;background:#111"></div>
<div style="left:659px;top:601px;width:20px;height:40px;background:linear-gradient(#d8d8d8 0,#f4f4f4 10%,#8a8a8a 22%,#4a4a4a 38%,#2e2e2e 47%,#0e0e0e 49%,#0e0e0e 52%,#e8e8e8 56%,#fafafa 62%,#9a9a9a 75%,#3a3a3a 95%);border:1px solid #0a0a0a;border-radius:2px"></div>
<div style="left:629px;top:716px;width:82px;height:1px;background:#2a2a2a"></div>
<div style="left:630px;top:717px;width:81px;height:18px;background:#2f7d32"></div>
<div class="t" style="left:630px;top:721px;width:81px;text-align:center;color:#fff;font-size:10px">6</div>
<div style="left:711px;top:480px;width:1px;height:56px;background:#262626"></div>
<div style="left:718px;top:484px;width:23px;height:30px;background:#111;border-radius:2px"></div>
<div style="left:719px;top:485px;width:21px;height:11px;background:#b9c3c0"></div>
<div style="left:719px;top:496px;width:21px;height:17px;background:#00c060"></div>
<div class="t" style="left:721px;top:502px;color:#fff;font-size:9.5px;font-weight:bold">FX</div>
<svg style="left:730px;top:486px" width="10" height="10" viewBox="0 0 10 10"><path d="M2.7,2.8 A3.6,3.6 0 1 0 7.3,2.8" fill="none" stroke="#1a9a50" stroke-width="1.4"/><line x1="5" y1="0.8" x2="5" y2="5" stroke="#1a9a50" stroke-width="1.4"/></svg>
<div style="left:747px;top:484px;width:40px;height:30px;background:#151515;border-radius:2px"></div>
<div style="left:748px;top:485px;width:38px;height:11px;background:#2e2e2e"></div>
<div class="t" style="left:752px;top:486.5px;color:#222;font-size:8.5px;font-weight:bold">M</div>
<div class="t" style="left:764px;top:486.5px;color:#222;font-size:8.5px;font-weight:bold">R</div>
<div class="t" style="left:775px;top:486.5px;color:#1a8ab8;font-size:8.5px;font-weight:bold">S</div>
<div class="t" style="left:752.5px;top:501.5px;color:#ccc;font-size:9px;font-weight:bold;transform:scaleX(0.72);transform-origin:0 0">ROUTING</div>
<div class="t" style="left:712px;top:519px;width:81px;text-align:center;color:#ccc;font-size:11px">Source_04</div>
<div style="left:712px;top:537px;width:81px;height:180px;background:#8ea996"></div>
<div style="left:711px;top:537px;width:1px;height:180px;background:#2a2a2a"></div>
<div style="left:743px;top:546px;width:18px;height:18px;background:radial-gradient(circle at 50% 35%,#fdfdfd,#c4c4c4 60%,#8a8a8a 90%);border-radius:50%;border:1px solid #666"></div>
<div style="left:751.5px;top:548px;width:1.5px;height:5px;background:#222"></div>
<svg style="left:712px;top:573px" width="70" height="137"><path d="M0,0 H52 A2,2 0 0 1 54,2 V104 A14,14 0 0 0 66,118 V136 H0 Z" fill="#222"/></svg>
<div style="left:762px;top:687px;width:22px;height:22px;background:#1a1a1a;border-radius:50%;box-shadow:0 1px 2px rgba(0,0,0,.5)"></div>
<div style="left:763px;top:688px;width:20px;height:20px;background:radial-gradient(circle,transparent 0 4px,#c9ada2 4.4px 5.8px,transparent 6.2px),linear-gradient(#7e4e3c 50%,#6a3a28 50%);border-radius:50%"></div>
<div style="left:770px;top:573px;width:19px;height:19px;background:linear-gradient(#f8f8f8,#dcdcdc);border:1px solid #555;border-radius:1px"></div>
<div class="t" style="left:774.5px;top:576.5px;color:#5a2a20;font-size:12px">M</div>
<div style="left:770px;top:599px;width:19px;height:19px;background:linear-gradient(#f8f8f8,#dcdcdc);border:1px solid #555;border-radius:1px"></div>
<div class="t" style="left:775.5px;top:602.5px;color:#4a5420;font-size:12px">S</div>
<svg style="left:772px;top:648px" width="17" height="38"><path d="M0,0 H16 V16 A8,8 0 0 1 8,24 A8,8 0 0 1 0,16 Z" fill="rgba(105,115,115,.6)"/><path d="M7,24 V31 L5,30 L6.5,36 L11,31 L9,31.5 V24 Z" fill="rgba(105,115,115,.6)"/></svg>
<div class="t" style="left:774.5px;top:650.5px;color:rgba(255,255,255,.7);font-size:8.5px;font-weight:bold">IN</div>
<div style="left:774px;top:659.5px;width:12px;height:12px;border:1.5px solid rgba(255,255,255,.55);border-radius:50%"></div>
<svg style="left:776.5px;top:663px" width="8" height="6"><polygon points="0.5,0.5 6.5,0.5 3.5,5" fill="rgba(255,255,255,.55)"/></svg>
<div class="t" style="left:718px;top:577px;color:#858585;font-size:10px;font-weight:bold">-inf</div>
<div class="t" style="left:720px;top:595px;color:#858585;font-size:10px;font-weight:bold">-6-</div>
<div class="t" style="left:717px;top:617.5px;color:#858585;font-size:10px;font-weight:bold">-18-</div>
<div class="t" style="left:717px;top:640.5px;color:#858585;font-size:10px;font-weight:bold">-30-</div>
<div class="t" style="left:717px;top:664px;color:#858585;font-size:10px;font-weight:bold">-42-</div>
<div class="t" style="left:717px;top:687px;color:#858585;font-size:10px;font-weight:bold">-54-</div>
<div style="left:751px;top:583px;width:1.5px;height:117px;background:#111"></div>
<div style="left:741px;top:601px;width:20px;height:40px;background:linear-gradient(#d8d8d8 0,#f4f4f4 10%,#8a8a8a 22%,#4a4a4a 38%,#2e2e2e 47%,#0e0e0e 49%,#0e0e0e 52%,#e8e8e8 56%,#fafafa 62%,#9a9a9a 75%,#3a3a3a 95%);border:1px solid #0a0a0a;border-radius:2px"></div>
<div style="left:711px;top:716px;width:82px;height:1px;background:#2a2a2a"></div>
<div style="left:712px;top:717px;width:81px;height:18px;background:#2f7d32"></div>
<div class="t" style="left:712px;top:721px;width:81px;text-align:center;color:#fff;font-size:10px">7</div>
<div style="left:793px;top:480px;width:1px;height:56px;background:#262626"></div>
<div style="left:800px;top:484px;width:23px;height:30px;background:#111;border-radius:2px"></div>
<div style="left:801px;top:485px;width:21px;height:11px;background:#b9c3c0"></div>
<div style="left:801px;top:496px;width:21px;height:17px;background:#a3b2b0"></div>
<div class="t" style="left:803px;top:502px;color:#333;font-size:9.5px;font-weight:bold">FX</div>
<svg style="left:812px;top:486px" width="10" height="10" viewBox="0 0 10 10"><path d="M2.7,2.8 A3.6,3.6 0 1 0 7.3,2.8" fill="none" stroke="#333" stroke-width="1.4"/><line x1="5" y1="0.8" x2="5" y2="5" stroke="#333" stroke-width="1.4"/></svg>
<div style="left:829px;top:484px;width:40px;height:30px;background:#151515;border-radius:2px"></div>
<div style="left:830px;top:485px;width:38px;height:11px;background:#2e2e2e"></div>
<div class="t" style="left:834px;top:486.5px;color:#10a050;font-size:8.5px;font-weight:bold">M</div>
<div class="t" style="left:846px;top:486.5px;color:#222;font-size:8.5px;font-weight:bold">R</div>
<div class="t" style="left:857px;top:486.5px;color:#1a8ab8;font-size:8.5px;font-weight:bold">S</div>
<div class="t" style="left:834.5px;top:501.5px;color:#ccc;font-size:9px;font-weight:bold;transform:scaleX(0.72);transform-origin:0 0">ROUTING</div>
<div style="left:794px;top:537px;width:81px;height:180px;background:#d2d6d6"></div>
<div style="left:793px;top:537px;width:1px;height:180px;background:#2a2a2a"></div>
<div style="left:825px;top:546px;width:18px;height:18px;background:radial-gradient(circle at 50% 35%,#fdfdfd,#c4c4c4 60%,#8a8a8a 90%);border-radius:50%;border:1px solid #666"></div>
<div style="left:833.5px;top:548px;width:1.5px;height:5px;background:#222"></div>
<svg style="left:794px;top:573px" width="70" height="137"><path d="M0,0 H52 A2,2 0 0 1 54,2 V104 A14,14 0 0 0 66,118 V136 H0 Z" fill="#222"/></svg>
<div style="left:844px;top:687px;width:22px;height:22px;background:#1a1a1a;border-radius:50%;box-shadow:0 1px 2px rgba(0,0,0,.5)"></div>
<div style="left:845px;top:688px;width:20px;height:20px;background:radial-gradient(circle,transparent 0 4px,#c9ada2 4.4px 5.8px,transparent 6.2px),linear-gradient(#7e4e3c 50%,#6a3a28 50%);border-radius:50%"></div>
<div style="left:852px;top:573px;width:19px;height:19px;background:linear-gradient(#f8f8f8,#dcdcdc);border:1px solid #555;border-radius:1px"></div>
<div class="t" style="left:856.5px;top:576.5px;color:#5a2a20;font-size:12px">M</div>
<div style="left:852px;top:599px;width:19px;height:19px;background:linear-gradient(#f8f8f8,#dcdcdc);border:1px solid #555;border-radius:1px"></div>
<div class="t" style="left:857.5px;top:602.5px;color:#4a5420;font-size:12px">S</div>
<svg style="left:854px;top:648px" width="17" height="38"><path d="M0,0 H16 V16 A8,8 0 0 1 8,24 A8,8 0 0 1 0,16 Z" fill="rgba(105,115,115,.6)"/><path d="M7,24 V31 L5,30 L6.5,36 L11,31 L9,31.5 V24 Z" fill="rgba(105,115,115,.6)"/></svg>
<div class="t" style="left:856.5px;top:650.5px;color:rgba(255,255,255,.7);font-size:8.5px;font-weight:bold">IN</div>
<div style="left:856px;top:659.5px;width:12px;height:12px;border:1.5px solid rgba(255,255,255,.55);border-radius:50%"></div>
<svg style="left:858.5px;top:663px" width="8" height="6"><polygon points="0.5,0.5 6.5,0.5 3.5,5" fill="rgba(255,255,255,.55)"/></svg>
<div class="t" style="left:800px;top:577px;color:#858585;font-size:10px;font-weight:bold">-inf</div>
<div class="t" style="left:802px;top:595px;color:#858585;font-size:10px;font-weight:bold">-6-</div>
<div class="t" style="left:799px;top:617.5px;color:#858585;font-size:10px;font-weight:bold">-18-</div>
<div class="t" style="left:799px;top:640.5px;color:#858585;font-size:10px;font-weight:bold">-30-</div>
<div class="t" style="left:799px;top:664px;color:#858585;font-size:10px;font-weight:bold">-42-</div>
<div class="t" style="left:799px;top:687px;color:#858585;font-size:10px;font-weight:bold">-54-</div>
<div style="left:833px;top:583px;width:1.5px;height:117px;background:#111"></div>
<div style="left:823px;top:601px;width:20px;height:40px;background:linear-gradient(#d8d8d8 0,#f4f4f4 10%,#8a8a8a 22%,#4a4a4a 38%,#2e2e2e 47%,#0e0e0e 49%,#0e0e0e 52%,#e8e8e8 56%,#fafafa 62%,#9a9a9a 75%,#3a3a3a 95%);border:1px solid #0a0a0a;border-radius:2px"></div>
<div style="left:793px;top:716px;width:82px;height:1px;background:#2a2a2a"></div>
<div style="left:794px;top:717px;width:81px;height:18px;background:#8a9898"></div>
<div class="t" style="left:794px;top:721px;width:81px;text-align:center;color:#fff;font-size:10px">8</div>
<div style="left:830px;top:712px;width:8px;height:8px;background:#eee;border:1.5px solid #555;border-radius:50%"></div>
<div style="left:858px;top:0px;width:739px;height:740px;background:#3a3a3a"></div>
<div style="left:1256px;top:6px;width:10px;height:413px;background:linear-gradient(#a9aba9,#8e908e 50%)"></div>
<div style="left:1256px;top:0px;width:10px;height:6px;background:#3c3c3c"></div>
<div style="left:1256px;top:215px;width:10px;height:40px;background:#8b72aa;border-top:1px solid #6a28c8"></div>
<div style="left:1256px;top:291px;width:10px;height:20px;background:#7c9392;border-top:1px solid #2e7a76"></div>
<div style="left:1256px;top:345px;width:10px;height:23px;background:#7272b6;border-top:1px solid #2020c8"></div>
<div style="left:1256px;top:418px;width:341px;height:322px;background:#2c2c2c"></div>
<div class="t" style="left:1275.5px;top:447px;color:#777;font-size:13px">Selection:</div>
<div class="t" style="left:1365px;top:447px;color:#777;font-size:13px">3.1.00</div>
<div class="t" style="left:1462px;top:447px;color:#777;font-size:13px">4.1.00</div>
<div class="t" style="left:1560px;top:447px;color:#777;font-size:13px">1.0.00</div>
<div style="left:1256px;top:471px;width:341px;height:1px;background:#3a3a3a"></div>
<div style="left:1256px;top:472px;width:341px;height:263px;background:#333"></div>
<div style="left:1256px;top:735px;width:341px;height:5px;background:#555"></div>
<div style="left:1597px;top:0px;width:3px;height:740px;background:#fff"></div>
<div style="left:859px;top:1px;width:397px;height:739px;background:#d6d6d6;border-radius:5px 5px 0 0"></div>
<div style="left:859px;top:1px;width:397px;height:21px;background:linear-gradient(#f6f6f6,#e9e9e9);border-radius:5px 5px 0 0;border-bottom:1px solid #d0d0d0"></div>
<div style="left:867px;top:6px;width:12px;height:12px;background:#dedede;border-radius:50%;border:1px solid #d2d2d2"></div>
<div style="left:887px;top:6px;width:12px;height:12px;background:#dedede;border-radius:50%;border:1px solid #d2d2d2"></div>
<div style="left:907px;top:6px;width:12px;height:12px;background:#dedede;border-radius:50%;border:1px solid #d2d2d2"></div>
<div style="left:928px;top:4px;width:316px;height:16px;overflow:hidden"><div class="t" style="left:0;top:1px;color:#adadad;font-size:13px;letter-spacing:-0.05px">VST3: ZEnc_O3_1CH (ZHdK) (1-&gt;16ch) - Track 4 "So.</div></div>
<svg style="left:1230px;top:3px" width="20" height="18"><g fill="none" stroke="#b8b8b8" stroke-width="1"><path d="M6,2 h8 M7,2 v7 M13,2 v7 M4,9 h12 l-2,3 h-8 z M10,12 v5"/></g></svg>
<div style="left:859px;top:22px;width:397px;height:26px;background:linear-gradient(#f0f0f0,#e4e4e4)"></div>
<div style="left:862px;top:25px;width:146px;height:19px;background:linear-gradient(#fdfdfd,#ededed);border:1px solid #c4c4c4;border-radius:2px"></div>
<div class="t" style="left:862px;top:29px;width:146px;text-align:center;color:#222;font-size:11px"></div>
<div class="t" style="left:866px;top:29px;color:#222;font-size:11px">Factory Presets</div>
<svg style="left:993px;top:27px" width="10" height="15"><polyline points="2,5.5 5,2.5 8,5.5" fill="none" stroke="#333" stroke-width="1.2"/><polyline points="2,9.5 5,12.5 8,9.5" fill="none" stroke="#333" stroke-width="1.2"/></svg>
<div style="left:1012px;top:25px;width:19px;height:19px;background:linear-gradient(#fdfdfd,#ededed);border:1px solid #c4c4c4;border-radius:2px"></div>
<div class="t" style="left:1012px;top:29px;width:19px;text-align:center;color:#222;font-size:11px">+</div>
<div style="left:1036px;top:25px;width:50px;height:19px;background:linear-gradient(#fdfdfd,#ededed);border:1px solid #c4c4c4;border-radius:2px"></div>
<div class="t" style="left:1036px;top:29px;width:50px;text-align:center;color:#222;font-size:11px">Param</div>
<div style="left:1090px;top:25px;width:84px;height:19px;background:linear-gradient(#fdfdfd,#ededed);border:1px solid #c4c4c4;border-radius:2px"></div>
<div class="t" style="left:1090px;top:29px;width:84px;text-align:center;color:#222;font-size:11px">1 in 16 out</div>
<div style="left:1177px;top:25px;width:28px;height:19px;background:linear-gradient(#fdfdfd,#ededed);border:1px solid #c4c4c4;border-radius:2px"></div>
<div class="t" style="left:1177px;top:29px;width:28px;text-align:center;color:#222;font-size:11px">UI</div>
<div style="left:1210px;top:27px;width:18px;height:18px;border:1px solid #777;border-radius:50%;background:linear-gradient(#fafafa,#e0e0e0)"></div>
<div style="left:1220px;top:36px;width:1.2px;height:7px;background:#333;transform:rotate(-25deg)"></div>
<div style="left:1236px;top:28px;width:14px;height:14px;background:#fafafa;border:1px solid #c8c8c8;border-radius:3px"></div>
<svg style="left:1237px;top:29px" width="12" height="12"><polyline points="2.5,6 5,9.5 10,2" fill="none" stroke="#111" stroke-width="1.8"/></svg>
<div style="left:859px;top:48px;width:397px;height:132px;background:#505050"></div>
<div style="left:859px;top:48px;width:397px;height:1px;background:#3a3a3a"></div>
<svg style="left:860px;top:49px" width="30" height="30" viewBox="0 0 30 30"><defs><radialGradient id="gg" cx="45%" cy="40%" r="60%"><stop offset="0" stop-color="#f6f8fb"/><stop offset="1" stop-color="#c9d0dc"/></radialGradient></defs><g fill="url(#gg)"><circle cx="15" cy="15.2" r="10.8"/><rect x="12.8" y="1.6" width="4.4" height="5.5" rx="0.8" transform="rotate(0 15 15.2)"/><rect x="12.8" y="1.6" width="4.4" height="5.5" rx="0.8" transform="rotate(45 15 15.2)"/><rect x="12.8" y="1.6" width="4.4" height="5.5" rx="0.8" transform="rotate(90 15 15.2)"/><rect x="12.8" y="1.6" width="4.4" height="5.5" rx="0.8" transform="rotate(135 15 15.2)"/><rect x="12.8" y="1.6" width="4.4" height="5.5" rx="0.8" transform="rotate(180 15 15.2)"/><rect x="12.8" y="1.6" width="4.4" height="5.5" rx="0.8" transform="rotate(225 15 15.2)"/><rect x="12.8" y="1.6" width="4.4" height="5.5" rx="0.8" transform="rotate(270 15 15.2)"/><rect x="12.8" y="1.6" width="4.4" height="5.5" rx="0.8" transform="rotate(315 15 15.2)"/></g><circle cx="15" cy="15.2" r="6.8" fill="none" stroke="#aab6c8" stroke-width="1"/><circle cx="15" cy="15.2" r="3.6" fill="#505050"/></svg>
<div class="t" style="left:1180.7px;top:62.5px;color:#fff;font-size:13.5px;letter-spacing:0.1px;-webkit-text-stroke:0.35px #fff">ZEnc 0.9.1</div>
<div class="t" style="left:864px;top:94px;color:#fff;font-size:13px;-webkit-text-stroke:0.35px #fff">Name:</div>
<div style="left:1018px;top:88px;width:137px;height:24px;background:#253035"></div>
<div class="t" style="left:1024px;top:94px;color:#fff;font-size:12px">–</div>
<div class="t" style="left:864px;top:126px;color:#fff;font-size:13px;-webkit-text-stroke:0.35px #fff">Cartesian:</div>
<div class="t" style="left:864px;top:157px;color:#fff;font-size:13px;-webkit-text-stroke:0.35px #fff">Polar:</div>
<div class="t" style="left:998px;top:126px;color:#fff;font-size:13px;-webkit-text-stroke:0.35px #fff">X:</div>
<div style="left:1018px;top:120px;width:53px;height:24px;background:#253035"></div>
<div class="t" style="left:1024px;top:126px;color:#fff;font-size:12px">–</div>
<div class="t" style="left:1086px;top:126px;color:#fff;font-size:13px;-webkit-text-stroke:0.35px #fff">Y:</div>
<div style="left:1105px;top:120px;width:53px;height:24px;background:#253035"></div>
<div class="t" style="left:1111px;top:126px;color:#fff;font-size:12px">–</div>
<div class="t" style="left:1173px;top:126px;color:#fff;font-size:13px;-webkit-text-stroke:0.35px #fff">Z:</div>
<div style="left:1192px;top:120px;width:53px;height:24px;background:#253035"></div>
<div class="t" style="left:1198px;top:126px;color:#fff;font-size:12px">–</div>
<div class="t" style="left:998px;top:157px;color:#fff;font-size:13px;-webkit-text-stroke:0.35px #fff">A:</div>
<div style="left:1018px;top:151px;width:53px;height:24px;background:#253035"></div>
<div class="t" style="left:1024px;top:157px;color:#fff;font-size:12px">–</div>
<div class="t" style="left:1086px;top:157px;color:#fff;font-size:13px;-webkit-text-stroke:0.35px #fff">E:</div>
<div style="left:1105px;top:151px;width:53px;height:24px;background:#253035"></div>
<div class="t" style="left:1111px;top:157px;color:#fff;font-size:12px">–</div>
<div class="t" style="left:1173px;top:157px;color:#fff;font-size:13px;-webkit-text-stroke:0.35px #fff">D:</div>
<div style="left:1192px;top:151px;width:53px;height:24px;background:#253035"></div>
<div class="t" style="left:1198px;top:157px;color:#fff;font-size:12px">–</div>
<svg style="left:859px;top:180px" width="397" height="560"><rect x="0" y="0" width="397" height="560" fill="#d8d8d8"/><rect x="11.5" y="0" width="375" height="372" fill="#d4d4d4" stroke="#606060" stroke-width="1"/><clipPath id="c1"><rect x="12" y="0" width="374" height="372"/></clipPath><g clip-path="url(#c1)" fill="none" stroke="#727272" stroke-width="1.5"><circle cx="198" cy="186" r="18.73"/><circle cx="198" cy="186" r="37.46"/><circle cx="198" cy="186" r="56.19"/><circle cx="198" cy="186" r="74.92"/><circle cx="198" cy="186" r="93.65"/><circle cx="198" cy="186" r="112.38"/><circle cx="198" cy="186" r="131.11"/><circle cx="198" cy="186" r="149.84"/><circle cx="198" cy="186" r="168.57"/><circle cx="198" cy="186" r="187.30"/><line x1="12" y1="186" x2="386" y2="186" stroke="#585858" stroke-width="1.8"/><line x1="198" y1="0" x2="198" y2="372" stroke="#585858" stroke-width="1.8"/></g><rect x="12.5" y="372.5" width="373" height="200" fill="#d4d4d4" stroke="#777" stroke-width="1.5"/><clipPath id="c2"><rect x="13" y="373" width="372" height="200"/></clipPath><g clip-path="url(#c2)" fill="none" stroke="#727272" stroke-width="1.5"><circle cx="198" cy="558.6" r="18.73"/><circle cx="198" cy="558.6" r="37.46"/><circle cx="198" cy="558.6" r="56.19"/><circle cx="198" cy="558.6" r="74.92"/><circle cx="198" cy="558.6" r="93.65"/><circle cx="198" cy="558.6" r="112.38"/><circle cx="198" cy="558.6" r="131.11"/><circle cx="198" cy="558.6" r="149.84"/><circle cx="198" cy="558.6" r="168.57"/><circle cx="198" cy="558.6" r="187.30"/><line x1="198" y1="372" x2="198" y2="560" stroke="#585858" stroke-width="1.8"/></g><line x1="12" y1="558.6" x2="386" y2="558.6" stroke="#555" stroke-width="1.5"/><text x="199" y="168.0" font-family="Liberation Sans" font-size="13.5" fill="#585858">0.1</text><text x="199" y="541.0" font-family="Liberation Sans" font-size="13.5" fill="#585858">0.1</text><text x="199" y="149.2" font-family="Liberation Sans" font-size="13.5" fill="#585858">0.2</text><text x="199" y="522.3" font-family="Liberation Sans" font-size="13.5" fill="#585858">0.2</text><text x="199" y="130.5" font-family="Liberation Sans" font-size="13.5" fill="#585858">0.3</text><text x="199" y="503.6" font-family="Liberation Sans" font-size="13.5" fill="#585858">0.3</text><text x="199" y="111.8" font-family="Liberation Sans" font-size="13.5" fill="#585858">0.4</text><text x="199" y="484.9" font-family="Liberation Sans" font-size="13.5" fill="#585858">0.4</text><text x="199" y="93.0" font-family="Liberation Sans" font-size="13.5" fill="#585858">0.5</text><text x="199" y="466.2" font-family="Liberation Sans" font-size="13.5" fill="#585858">0.5</text><text x="199" y="74.2" font-family="Liberation Sans" font-size="13.5" fill="#585858">0.6</text><text x="199" y="447.5" font-family="Liberation Sans" font-size="13.5" fill="#585858">0.6</text><text x="199" y="55.5" font-family="Liberation Sans" font-size="13.5" fill="#585858">0.7</text><text x="199" y="428.8" font-family="Liberation Sans" font-size="13.5" fill="#585858">0.7</text><text x="199" y="36.8" font-family="Liberation Sans" font-size="13.5" fill="#585858">0.8</text><text x="199" y="410.1" font-family="Liberation Sans" font-size="13.5" fill="#585858">0.8</text><text x="199" y="18.0" font-family="Liberation Sans" font-size="13.5" fill="#585858">0.9</text><text x="199" y="391.4" font-family="Liberation Sans" font-size="13.5" fill="#585858">0.9</text><circle cx="187.4000000000001" cy="12.699999999999989" r="6.5" fill="#0000ee"/><text x="194.5" y="39" font-family="Liberation Serif" font-size="15" font-weight="bold" fill="#2a2ae0">1</text><circle cx="187.4000000000001" cy="558.6" r="6.5" fill="#0000ee"/><text x="194.5" y="553" font-family="Liberation Serif" font-size="15" font-weight="bold" fill="#2a2ae0">1</text></svg>
<div style="left:1266px;top:3px;width:330px;height:438px;background:#bbbfbf;border-radius:5px;box-shadow:0 0 0 0.5px #999"></div>
<div style="left:1266px;top:3px;width:330px;height:22px;background:linear-gradient(#ececec,#d9d9d9);border-radius:5px 5px 0 0;border-bottom:1px solid #b8b8b8"></div>
<div style="left:1273px;top:8px;width:12px;height:12px;background:#fc5b57;border-radius:50%;border:0.5px solid #e0443e"></div>
<div style="left:1293px;top:8px;width:12px;height:12px;background:#fdbc2e;border-radius:50%;border:0.5px solid #dea123"></div>
<div style="left:1312px;top:8px;width:12px;height:12px;background:#d9d9d9;border-radius:50%;border:0.5px solid #c8c8c8"></div>
<div class="t" style="left:1334px;top:7px;color:#333;font-size:13.5px;letter-spacing:-0.1px">Envelopes for track 4 "Source_01"</div>
<div style="left:1270px;top:28px;width:82px;height:17px;background:linear-gradient(#fafafa,#ececec);border:1px solid #c0c0c0;border-radius:2px;box-shadow:0 0.5px 0 #aaa"></div>
<div class="t" style="left:1270px;top:31px;width:82px;text-align:center;color:#222;font-size:11px">Show all active</div>
<div style="left:1357px;top:28px;width:67px;height:17px;background:linear-gradient(#fafafa,#ececec);border:1px solid #c0c0c0;border-radius:2px;box-shadow:0 0.5px 0 #aaa"></div>
<div class="t" style="left:1357px;top:31px;width:67px;text-align:center;color:#222;font-size:11px">Hide all</div>
<div style="left:1429px;top:28px;width:84px;height:17px;background:linear-gradient(#fafafa,#ececec);border:1px solid #c0c0c0;border-radius:2px;box-shadow:0 0.5px 0 #aaa"></div>
<div class="t" style="left:1429px;top:31px;width:84px;text-align:center;color:#222;font-size:11px">Arm all visible</div>
<div style="left:1519px;top:28px;width:66px;height:17px;background:linear-gradient(#fafafa,#ececec);border:1px solid #c0c0c0;border-radius:2px;box-shadow:0 0.5px 0 #aaa"></div>
<div class="t" style="left:1519px;top:31px;width:66px;text-align:center;color:#222;font-size:11px">Disarm all</div>
<div class="t" style="left:1270px;top:55px;color:#222;font-size:11px">Automation mode:</div>
<div style="left:1366px;top:51px;width:76px;height:17px;background:linear-gradient(#fcfcfc,#efefef);border:1px solid #bdbdbd;border-radius:3px"></div>
<div class="t" style="left:1371px;top:55px;color:#222;font-size:11px">Read</div>
<svg style="left:1429px;top:53px" width="10" height="14"><polyline points="2,5 5,2 8,5" fill="none" stroke="#333" stroke-width="1.2"/><polyline points="2,9 5,12 8,9" fill="none" stroke="#333" stroke-width="1.2"/></svg>
<div class="t" style="left:1448px;top:55px;color:#222;font-size:11px">Highlight:</div>
<div style="left:1500px;top:50px;width:89px;height:19px;background:#fff;border:2.5px solid #6a9ee0;border-radius:3px"></div>
<div style="left:1505px;top:54px;width:1px;height:11px;background:#111"></div>
<div class="t" style="left:1270px;top:78px;color:#555;font-size:10.5px;letter-spacing:0.3px">Track Envelopes</div>
<div style="left:1270px;top:94px;width:12px;height:12px;background:#fff;border:1px solid #8a8a8a"></div>
<div class="t" style="left:1288px;top:95px;color:#333;font-size:10.5px;letter-spacing:0.2px">Volume</div>
<div style="left:1492px;top:94px;width:12px;height:12px;background:#fff;border:1px solid #8a8a8a"></div>
<div class="t" style="left:1510px;top:95px;color:#333;font-size:10.5px;letter-spacing:0.2px">Visible</div>
<div style="left:1548px;top:94px;width:12px;height:12px;background:#fff;border:1px solid #8a8a8a"></div>
<div class="t" style="left:1566px;top:95px;color:#333;font-size:10.5px;letter-spacing:0.2px">Arm</div>
<div style="left:1270px;top:110px;width:12px;height:12px;background:#fff;border:1px solid #8a8a8a"></div>
<div class="t" style="left:1288px;top:111px;color:#333;font-size:10.5px;letter-spacing:0.2px">Pan</div>
<div style="left:1492px;top:110px;width:12px;height:12px;background:#fff;border:1px solid #8a8a8a"></div>
<div class="t" style="left:1510px;top:111px;color:#333;font-size:10.5px;letter-spacing:0.2px">Visible</div>
<div style="left:1548px;top:110px;width:12px;height:12px;background:#fff;border:1px solid #8a8a8a"></div>
<div class="t" style="left:1566px;top:111px;color:#333;font-size:10.5px;letter-spacing:0.2px">Arm</div>
<div style="left:1270px;top:126px;width:12px;height:12px;background:#fff;border:1px solid #8a8a8a"></div>
<div class="t" style="left:1288px;top:127px;color:#333;font-size:10.5px;letter-spacing:0.2px">Width</div>
<div style="left:1492px;top:126px;width:12px;height:12px;background:#fff;border:1px solid #8a8a8a"></div>
<div class="t" style="left:1510px;top:127px;color:#333;font-size:10.5px;letter-spacing:0.2px">Visible</div>
<div style="left:1548px;top:126px;width:12px;height:12px;background:#fff;border:1px solid #8a8a8a"></div>
<div class="t" style="left:1566px;top:127px;color:#333;font-size:10.5px;letter-spacing:0.2px">Arm</div>
<div style="left:1270px;top:142px;width:12px;height:12px;background:#fff;border:1px solid #8a8a8a"></div>
<div class="t" style="left:1288px;top:143px;color:#333;font-size:10.5px;letter-spacing:0.2px">Volume (Pre-FX)</div>
<div style="left:1492px;top:142px;width:12px;height:12px;background:#fff;border:1px solid #8a8a8a"></div>
<div class="t" style="left:1510px;top:143px;color:#333;font-size:10.5px;letter-spacing:0.2px">Visible</div>
<div style="left:1548px;top:142px;width:12px;height:12px;background:#fff;border:1px solid #8a8a8a"></div>
<div class="t" style="left:1566px;top:143px;color:#333;font-size:10.5px;letter-spacing:0.2px">Arm</div>
<div style="left:1270px;top:158px;width:12px;height:12px;background:#fff;border:1px solid #8a8a8a"></div>
<div class="t" style="left:1288px;top:159px;color:#333;font-size:10.5px;letter-spacing:0.2px">Pan (Pre-FX)</div>
<div style="left:1492px;top:158px;width:12px;height:12px;background:#fff;border:1px solid #8a8a8a"></div>
<div class="t" style="left:1510px;top:159px;color:#333;font-size:10.5px;letter-spacing:0.2px">Visible</div>
<div style="left:1548px;top:158px;width:12px;height:12px;background:#fff;border:1px solid #8a8a8a"></div>
<div class="t" style="left:1566px;top:159px;color:#333;font-size:10.5px;letter-spacing:0.2px">Arm</div>
<div style="left:1270px;top:174px;width:12px;height:12px;background:#fff;border:1px solid #8a8a8a"></div>
<div class="t" style="left:1288px;top:175px;color:#333;font-size:10.5px;letter-spacing:0.2px">Width (Pre-FX)</div>
<div style="left:1492px;top:174px;width:12px;height:12px;background:#fff;border:1px solid #8a8a8a"></div>
<div class="t" style="left:1510px;top:175px;color:#333;font-size:10.5px;letter-spacing:0.2px">Visible</div>
<div style="left:1548px;top:174px;width:12px;height:12px;background:#fff;border:1px solid #8a8a8a"></div>
<div class="t" style="left:1566px;top:175px;color:#333;font-size:10.5px;letter-spacing:0.2px">Arm</div>
<div style="left:1270px;top:190px;width:12px;height:12px;background:#fff;border:1px solid #8a8a8a"></div>
<div class="t" style="left:1288px;top:191px;color:#333;font-size:10.5px;letter-spacing:0.2px">Trim Volume</div>
<div style="left:1492px;top:190px;width:12px;height:12px;background:#fff;border:1px solid #8a8a8a"></div>
<div class="t" style="left:1510px;top:191px;color:#333;font-size:10.5px;letter-spacing:0.2px">Visible</div>
<div style="left:1270px;top:205px;width:12px;height:12px;background:#fff;border:1px solid #8a8a8a"></div>
<div class="t" style="left:1288px;top:206px;color:#333;font-size:10.5px;letter-spacing:0.2px">Mute</div>
<div style="left:1492px;top:205px;width:12px;height:12px;background:#fff;border:1px solid #8a8a8a"></div>
<div class="t" style="left:1510px;top:206px;color:#333;font-size:10.5px;letter-spacing:0.2px">Visible</div>
<div style="left:1548px;top:205px;width:12px;height:12px;background:#fff;border:1px solid #8a8a8a"></div>
<div class="t" style="left:1566px;top:206px;color:#333;font-size:10.5px;letter-spacing:0.2px">Arm</div>
<div class="t" style="left:1270px;top:230px;color:#555;font-size:10.5px;letter-spacing:0.3px">Send Envelopes</div>
<div style="left:1270px;top:247px;width:12px;height:12px;background:#fff;border:1px solid #8a8a8a"></div>
<div class="t" style="left:1288px;top:248px;color:#333;font-size:10.5px;letter-spacing:0.2px">Track 3 "Bformat_03" Send Volume</div>
<div style="left:1492px;top:247px;width:12px;height:12px;background:#fff;border:1px solid #8a8a8a"></div>
<div class="t" style="left:1510px;top:248px;color:#333;font-size:10.5px;letter-spacing:0.2px">Visible</div>
<div style="left:1548px;top:247px;width:12px;height:12px;background:#fff;border:1px solid #8a8a8a"></div>
<div class="t" style="left:1566px;top:248px;color:#333;font-size:10.5px;letter-spacing:0.2px">Arm</div>
<div style="left:1270px;top:263px;width:12px;height:12px;background:#fff;border:1px solid #8a8a8a"></div>
<div class="t" style="left:1288px;top:264px;color:#333;font-size:10.5px;letter-spacing:0.2px">Track 3 "Bformat_03" Send Pan</div>
<div style="left:1492px;top:263px;width:12px;height:12px;background:#fff;border:1px solid #8a8a8a"></div>
<div class="t" style="left:1510px;top:264px;color:#333;font-size:10.5px;letter-spacing:0.2px">Visible</div>
<div style="left:1548px;top:263px;width:12px;height:12px;background:#fff;border:1px solid #8a8a8a"></div>
<div class="t" style="left:1566px;top:264px;color:#333;font-size:10.5px;letter-spacing:0.2px">Arm</div>
<div style="left:1270px;top:279px;width:12px;height:12px;background:#fff;border:1px solid #8a8a8a"></div>
<div class="t" style="left:1288px;top:280px;color:#333;font-size:10.5px;letter-spacing:0.2px">Track 3 "Bformat_03" Send Mute</div>
<div style="left:1492px;top:279px;width:12px;height:12px;background:#fff;border:1px solid #8a8a8a"></div>
<div class="t" style="left:1510px;top:280px;color:#333;font-size:10.5px;letter-spacing:0.2px">Visible</div>
<div style="left:1548px;top:279px;width:12px;height:12px;background:#fff;border:1px solid #8a8a8a"></div>
<div class="t" style="left:1566px;top:280px;color:#333;font-size:10.5px;letter-spacing:0.2px">Arm</div>
<div style="left:1270px;top:304px;width:12px;height:12px;background:#fff;border:1px solid #8a8a8a"></div>
<div class="t" style="left:1288px;top:305px;color:#333;font-size:10.5px;letter-spacing:0.2px">Show last touched FX parameters only</div>
<div style="left:1271px;top:327px;width:9px;height:9px;border:1px solid #333"></div>
<div style="left:1273px;top:331px;width:5px;height:1px;background:#333"></div>
<div class="t" style="left:1288px;top:326px;color:#333;font-size:10.5px;letter-spacing:0px">VST3: ZEnc_O3_1CH (ZHdK) (1-&gt;16‹Filter:</div>
<div style="left:1492px;top:325px;width:98px;height:14px;background:#fff;border:1px solid #aaa"></div>
<div style="left:1270px;top:344px;width:12px;height:12px;background:#fff;border:1px solid #8a8a8a"></div>
<svg style="left:1270px;top:344px" width="12" height="12"><path d="M2,2 L10,10 M10,2 L2,10" stroke="#333" stroke-width="1"/></svg>
<div class="t" style="left:1288px;top:345px;color:#333;font-size:10.5px;letter-spacing:0.2px">X 1</div>
<div style="left:1367px;top:344px;width:12px;height:12px;background:#fff;border:1px solid #8a8a8a"></div>
<svg style="left:1367px;top:344px" width="12" height="12"><path d="M2,2 L10,10 M10,2 L2,10" stroke="#333" stroke-width="1"/></svg>
<div class="t" style="left:1386px;top:345px;color:#333;font-size:10.5px;letter-spacing:0.2px">Visible</div>
<div style="left:1423px;top:344px;width:12px;height:12px;background:#fff;border:1px solid #8a8a8a"></div>
<svg style="left:1423px;top:344px" width="12" height="12"><path d="M2,2 L10,10 M10,2 L2,10" stroke="#333" stroke-width="1"/></svg>
<div class="t" style="left:1441px;top:345px;color:#333;font-size:10.5px;letter-spacing:0.2px">Arm</div>
<div style="left:1467px;top:343px;width:38px;height:14px;background:#c8cbcb;border:1px solid #333"></div>
<div class="t" style="left:1468px;top:345px;color:#333;font-size:10.5px;letter-spacing:0.2px">Learn...</div>
<div style="left:1508px;top:343px;width:47px;height:14px;background:#c8cbcb;border:1px solid #333"></div>
<div class="t" style="left:1514px;top:345px;color:#333;font-size:10.5px;letter-spacing:0.2px">Mod...</div>
<div style="left:1558px;top:344px;width:12px;height:12px;background:#fff;border:1px solid #8a8a8a"></div>
<div class="t" style="left:1576px;top:345px;color:#333;font-size:10.5px;letter-spacing:0.2px">UI</div>
<div style="left:1270px;top:360px;width:12px;height:12px;background:#fff;border:1px solid #8a8a8a"></div>
<svg style="left:1270px;top:360px" width="12" height="12"><path d="M2,2 L10,10 M10,2 L2,10" stroke="#333" stroke-width="1"/></svg>
<div class="t" style="left:1288px;top:361px;color:#333;font-size:10.5px;letter-spacing:0.2px">Y 1</div>
<div style="left:1367px;top:360px;width:12px;height:12px;background:#fff;border:1px solid #8a8a8a"></div>
<svg style="left:1367px;top:360px" width="12" height="12"><path d="M2,2 L10,10 M10,2 L2,10" stroke="#333" stroke-width="1"/></svg>
<div class="t" style="left:1386px;top:361px;color:#333;font-size:10.5px;letter-spacing:0.2px">Visible</div>
<div style="left:1423px;top:360px;width:12px;height:12px;background:#fff;border:1px solid #8a8a8a"></div>
<svg style="left:1423px;top:360px" width="12" height="12"><path d="M2,2 L10,10 M10,2 L2,10" stroke="#333" stroke-width="1"/></svg>
<div class="t" style="left:1441px;top:361px;color:#333;font-size:10.5px;letter-spacing:0.2px">Arm</div>
<div style="left:1467px;top:359px;width:38px;height:14px;background:#c8cbcb;border:1px solid #333"></div>
<div class="t" style="left:1468px;top:361px;color:#333;font-size:10.5px;letter-spacing:0.2px">Learn...</div>
<div style="left:1508px;top:359px;width:47px;height:14px;background:#c8cbcb;border:1px solid #333"></div>
<div class="t" style="left:1514px;top:361px;color:#333;font-size:10.5px;letter-spacing:0.2px">Mod...</div>
<div style="left:1558px;top:360px;width:12px;height:12px;background:#fff;border:1px solid #8a8a8a"></div>
<div class="t" style="left:1576px;top:361px;color:#333;font-size:10.5px;letter-spacing:0.2px">UI</div>
<div style="left:1270px;top:376px;width:12px;height:12px;background:#fff;border:1px solid #8a8a8a"></div>
<svg style="left:1270px;top:376px" width="12" height="12"><path d="M2,2 L10,10 M10,2 L2,10" stroke="#333" stroke-width="1"/></svg>
<div class="t" style="left:1288px;top:377px;color:#333;font-size:10.5px;letter-spacing:0.2px">Z 1</div>
<div style="left:1367px;top:376px;width:12px;height:12px;background:#fff;border:1px solid #8a8a8a"></div>
<svg style="left:1367px;top:376px" width="12" height="12"><path d="M2,2 L10,10 M10,2 L2,10" stroke="#333" stroke-width="1"/></svg>
<div class="t" style="left:1386px;top:377px;color:#333;font-size:10.5px;letter-spacing:0.2px">Visible</div>
<div style="left:1423px;top:376px;width:12px;height:12px;background:#fff;border:1px solid #8a8a8a"></div>
<svg style="left:1423px;top:376px" width="12" height="12"><path d="M2,2 L10,10 M10,2 L2,10" stroke="#333" stroke-width="1"/></svg>
<div class="t" style="left:1441px;top:377px;color:#333;font-size:10.5px;letter-spacing:0.2px">Arm</div>
<div style="left:1467px;top:375px;width:38px;height:14px;background:#c8cbcb;border:1px solid #333"></div>
<div class="t" style="left:1468px;top:377px;color:#333;font-size:10.5px;letter-spacing:0.2px">Learn...</div>
<div style="left:1508px;top:375px;width:47px;height:14px;background:#c8cbcb;border:1px solid #333"></div>
<div class="t" style="left:1514px;top:377px;color:#333;font-size:10.5px;letter-spacing:0.2px">Mod...</div>
<div style="left:1558px;top:376px;width:12px;height:12px;background:#fff;border:1px solid #8a8a8a"></div>
<div class="t" style="left:1576px;top:377px;color:#333;font-size:10.5px;letter-spacing:0.2px">UI</div>
<div style="left:1270px;top:392px;width:12px;height:12px;background:#fff;border:1px solid #8a8a8a"></div>
<div class="t" style="left:1288px;top:393px;color:#333;font-size:10.5px;letter-spacing:0.2px">Bypass</div>
<div style="left:1367px;top:392px;width:12px;height:12px;background:#fff;border:1px solid #8a8a8a"></div>
<div class="t" style="left:1386px;top:393px;color:#333;font-size:10.5px;letter-spacing:0.2px">Visible</div>
<div style="left:1423px;top:392px;width:12px;height:12px;background:#fff;border:1px solid #8a8a8a"></div>
<div class="t" style="left:1441px;top:393px;color:#333;font-size:10.5px;letter-spacing:0.2px">Arm</div>
<div style="left:1467px;top:391px;width:38px;height:14px;background:#c8cbcb;border:1px solid #333"></div>
<div class="t" style="left:1468px;top:393px;color:#333;font-size:10.5px;letter-spacing:0.2px">Learn...</div>
<div style="left:1508px;top:391px;width:47px;height:14px;background:#c8cbcb;border:1px solid #333"></div>
<div class="t" style="left:1514px;top:393px;color:#333;font-size:10.5px;letter-spacing:0.2px">Mod...</div>
<div style="left:1558px;top:392px;width:12px;height:12px;background:#fff;border:1px solid #8a8a8a"></div>
<div class="t" style="left:1576px;top:393px;color:#333;font-size:10.5px;letter-spacing:0.2px">UI</div>
<div style="left:1270px;top:408px;width:12px;height:12px;background:#fff;border:1px solid #8a8a8a"></div>
<div class="t" style="left:1288px;top:409px;color:#333;font-size:10.5px;letter-spacing:0.2px">Bypass</div>
<div style="left:1367px;top:408px;width:12px;height:12px;background:#fff;border:1px solid #8a8a8a"></div>
<div class="t" style="left:1386px;top:409px;color:#333;font-size:10.5px;letter-spacing:0.2px">Visible</div>
<div style="left:1423px;top:408px;width:12px;height:12px;background:#fff;border:1px solid #8a8a8a"></div>
<div class="t" style="left:1441px;top:409px;color:#333;font-size:10.5px;letter-spacing:0.2px">Arm</div>
<div style="left:1467px;top:407px;width:38px;height:14px;background:#c8cbcb;border:1px solid #333"></div>
<div class="t" style="left:1468px;top:409px;color:#333;font-size:10.5px;letter-spacing:0.2px">Learn...</div>
<div style="left:1508px;top:407px;width:47px;height:14px;background:#c8cbcb;border:1px solid #333"></div>
<div class="t" style="left:1514px;top:409px;color:#333;font-size:10.5px;letter-spacing:0.2px">Mod...</div>
<div style="left:1558px;top:408px;width:12px;height:12px;background:#fff;border:1px solid #8a8a8a"></div>
<div class="t" style="left:1576px;top:409px;color:#333;font-size:10.5px;letter-spacing:0.2px">UI</div>
<div style="left:1270px;top:423px;width:12px;height:12px;background:#fff;border:1px solid #8a8a8a"></div>
<div class="t" style="left:1288px;top:424px;color:#333;font-size:10.5px;letter-spacing:0.2px">Wet</div>
<div style="left:1367px;top:423px;width:12px;height:12px;background:#fff;border:1px solid #8a8a8a"></div>
<div class="t" style="left:1386px;top:424px;color:#333;font-size:10.5px;letter-spacing:0.2px">Visible</div>
<div style="left:1423px;top:423px;width:12px;height:12px;background:#fff;border:1px solid #8a8a8a"></div>
<div class="t" style="left:1441px;top:424px;color:#333;font-size:10.5px;letter-spacing:0.2px">Arm</div>
<div style="left:1467px;top:422px;width:38px;height:14px;background:#c8cbcb;border:1px solid #333"></div>
<div class="t" style="left:1468px;top:424px;color:#333;font-size:10.5px;letter-spacing:0.2px">Learn...</div>
<div style="left:1508px;top:422px;width:47px;height:14px;background:#c8cbcb;border:1px solid #333"></div>
<div class="t" style="left:1514px;top:424px;color:#333;font-size:10.5px;letter-spacing:0.2px">Mod...</div>
<div style="left:1558px;top:423px;width:12px;height:12px;background:#fff;border:1px solid #8a8a8a"></div>
<div class="t" style="left:1576px;top:424px;color:#333;font-size:10.5px;letter-spacing:0.2px">UI</div>
<div style="left:94px;top:132px;width:765px;height:247px;border:3px solid #ff2a0a"></div>
<div style="left:122px;top:166px;width:46px;height:24px;border:1.5px solid #ff2a0a"></div>
<div class="t" style="left:23.5px;top:166.5px;color:#ff2a0a;font-size:26.5px;-webkit-text-stroke:0.5px #ff2a0a">[A]</div>
<svg style="left:0;top:0" width="1600" height="740"><polygon points="55,180.5 110,175.5 110,179 55,183" fill="#ff2a0a"/><polygon points="123.5,176 105.5,169.5 110,177.5 106,187" fill="#ff2a0a"/><polygon points="975.5,267.5 1030,209.5 1034,213 977.5,269" fill="#ff2a0a"/><polygon points="1044.5,200 1026,207 1032,211 1038,219.5" fill="#ff2a0a"/></svg>
<div class="t" style="left:493px;top:163.5px;color:#ff2a0a;font-size:26.5px;-webkit-text-stroke:0.5px #ff2a0a">[D]</div>
<div class="t" style="left:958px;top:269.5px;color:#ff2a0a;font-size:26px;-webkit-text-stroke:0.5px #ff2a0a">[C]</div>
<div class="t" style="left:1493px;top:296.5px;color:#ff2a0a;font-size:26.5px;-webkit-text-stroke:0.5px #ff2a0a">[B]</div>
<div style="left:1263px;top:336px;width:336px;height:60px;border:3px solid #ff2a0a"></div>
</body></html>
